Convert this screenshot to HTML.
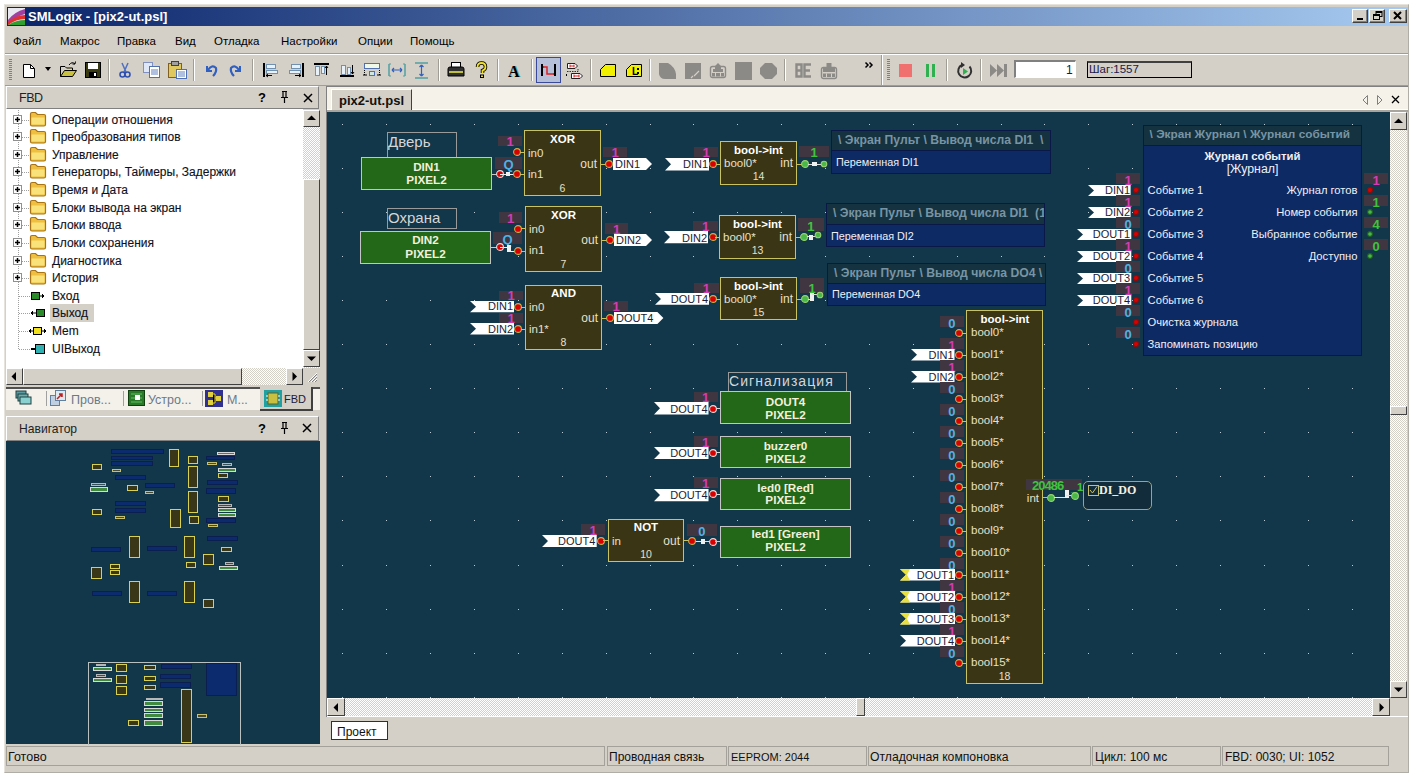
<!DOCTYPE html><html><head><meta charset="utf-8"><style>
*{margin:0;padding:0;box-sizing:border-box}
html,body{width:1416px;height:778px;overflow:hidden;background:#fff;font-family:"Liberation Sans",sans-serif;font-size:12px;color:#000}
div{position:absolute}
.t{white-space:pre;line-height:1}
svg{position:absolute;overflow:visible}
</style></head><body>
<div style="left:4px;top:4px;width:1405px;height:769px;background:#d4d0c8;border-left:1px solid #e6e3dc;border-top:1px solid #e6e3dc;border-right:1px solid #b0ada6;border-bottom:1px solid #b0ada6"></div>
<div style="left:7px;top:7px;width:1401px;height:19px;background:linear-gradient(90deg,#0a246a 0%,#a6caf0 100%)"></div>
<div class="t" style="left:28px;top:10px;color:#fff;font-weight:bold;font-size:13px">SMLogix - [pix2-ut.psl]</div>
<svg style="left:8px;top:8px" width="17" height="17" viewBox="0 0 17 17"><rect x="0" y="0" width="17" height="17" fill="#e8e8f0"/><path d="M0 17 L0 12 Q6 4 17 1 L17 6 Q8 8 0 17Z" fill="#a040a0"/><path d="M0 17 L0 14 Q8 7 17 7 L17 11 Q8 11 0 17Z" fill="#e03030"/><path d="M0 17 Q8 12 17 12 L17 17Z" fill="#30a030"/></svg>
<div style="left:1352px;top:9px;width:16px;height:14px;background:#d4d0c8;border-top:1px solid #fff;border-left:1px solid #fff;border-right:1px solid #404040;border-bottom:1px solid #404040;box-shadow:inset -1px -1px 0 #808080"></div>
<div style="left:1369px;top:9px;width:16px;height:14px;background:#d4d0c8;border-top:1px solid #fff;border-left:1px solid #fff;border-right:1px solid #404040;border-bottom:1px solid #404040;box-shadow:inset -1px -1px 0 #808080"></div>
<div style="left:1389px;top:9px;width:18px;height:14px;background:#d4d0c8;border-top:1px solid #fff;border-left:1px solid #fff;border-right:1px solid #404040;border-bottom:1px solid #404040;box-shadow:inset -1px -1px 0 #808080"></div>
<div style="left:1357px;top:18px;width:6px;height:2px;background:#000"></div>
<svg style="left:1373px;top:11px" width="10" height="10"><rect x="3" y="0.5" width="6" height="5" fill="none" stroke="#000"/><rect x="3" y="0" width="6" height="2" fill="#000"/><rect x="0.5" y="3.5" width="6" height="5" fill="#d4d0c8" stroke="#000"/><rect x="0" y="3" width="7" height="2" fill="#000"/></svg>
<svg style="left:1393px;top:11px" width="10" height="10"><path d="M1 1 L8 8 M8 1 L1 8" stroke="#000" stroke-width="2"/></svg>
<div class="t" style="left:13px;top:36px;font-size:11.5px;color:#000">Файл</div>
<div class="t" style="left:60px;top:36px;font-size:11.5px;color:#000">Макрос</div>
<div class="t" style="left:117px;top:36px;font-size:11.5px;color:#000">Правка</div>
<div class="t" style="left:175px;top:36px;font-size:11.5px;color:#000">Вид</div>
<div class="t" style="left:214px;top:36px;font-size:11.5px;color:#000">Отладка</div>
<div class="t" style="left:281px;top:36px;font-size:11.5px;color:#000">Настройки</div>
<div class="t" style="left:358px;top:36px;font-size:11.5px;color:#000">Опции</div>
<div class="t" style="left:410px;top:36px;font-size:11.5px;color:#000">Помощь</div>
<div style="left:5px;top:53px;width:1403px;height:1px;background:#a09d96"></div>
<div style="left:5px;top:54px;width:1403px;height:1px;background:#fff"></div>
<div style="left:5px;top:85px;width:1403px;height:1px;background:#a09d96"></div>
<div style="left:9px;top:59px;width:3px;height:22px;background:repeating-linear-gradient(180deg,#808080 0 1px,transparent 1px 2px)"></div>
<div style="left:887px;top:59px;width:3px;height:22px;background:repeating-linear-gradient(180deg,#808080 0 1px,transparent 1px 2px)"></div>
<div style="left:108px;top:59px;width:2px;height:22px;border-left:1px solid #a09d96;border-right:1px solid #fff"></div>
<div style="left:193px;top:59px;width:2px;height:22px;border-left:1px solid #a09d96;border-right:1px solid #fff"></div>
<div style="left:252px;top:59px;width:2px;height:22px;border-left:1px solid #a09d96;border-right:1px solid #fff"></div>
<div style="left:438px;top:59px;width:2px;height:22px;border-left:1px solid #a09d96;border-right:1px solid #fff"></div>
<div style="left:497px;top:59px;width:2px;height:22px;border-left:1px solid #a09d96;border-right:1px solid #fff"></div>
<div style="left:531px;top:59px;width:2px;height:22px;border-left:1px solid #a09d96;border-right:1px solid #fff"></div>
<div style="left:590px;top:59px;width:2px;height:22px;border-left:1px solid #a09d96;border-right:1px solid #fff"></div>
<div style="left:649px;top:59px;width:2px;height:22px;border-left:1px solid #a09d96;border-right:1px solid #fff"></div>
<div style="left:784px;top:59px;width:2px;height:22px;border-left:1px solid #a09d96;border-right:1px solid #fff"></div>
<div style="left:881px;top:55px;width:2px;height:30px;border-left:1px solid #a09d96;border-right:1px solid #fff"></div>
<div style="left:946px;top:59px;width:2px;height:22px;border-left:1px solid #a09d96;border-right:1px solid #fff"></div>
<div style="left:980px;top:59px;width:2px;height:22px;border-left:1px solid #a09d96;border-right:1px solid #fff"></div>
<svg style="left:22px;top:63px" width="14" height="16" viewBox="0 0 14 16"><path d="M1.5 1.5 H8.5 L12.5 5.5 V14.5 H1.5Z" fill="#fff" stroke="#000"/><path d="M8.5 1.5 V5.5 H12.5" fill="none" stroke="#000"/></svg>
<svg style="left:45px;top:67px" width="6" height="4" viewBox="0 0 6 4"><path d="M0 0 H6 L3 4Z" fill="#000"/></svg>
<svg style="left:59px;top:61px" width="19" height="17" viewBox="0 0 19 17"><path d="M1.5 5.5 H6 L7.5 7 H13.5 V9" fill="#e8e0a0" stroke="#000"/><path d="M1.5 5.5 V15.5 H13.5 L17.5 9.5 H5.5 L1.5 15.5" fill="#c8c040" stroke="#000"/><path d="M10 4 Q13 0 16 3 M16 3 L16.5 0.5 M16 3 L13.5 3" stroke="#000" fill="none"/></svg>
<svg style="left:85px;top:62px" width="16" height="16" viewBox="0 0 16 16"><rect x="0.5" y="0.5" width="15" height="15" fill="#3a3a10" stroke="#000"/><rect x="3" y="1" width="10" height="6" fill="#fff"/><rect x="4" y="10" width="8" height="5" fill="#000"/><rect x="9" y="11" width="2" height="3" fill="#fff"/></svg>
<svg style="left:119px;top:62px" width="12" height="16" viewBox="0 0 12 16"><path d="M3 1 L7 10 M9 1 L5 10" stroke="#5070c0" stroke-width="1.5"/><circle cx="3.5" cy="12.5" r="2.5" fill="none" stroke="#3050b0" stroke-width="1.6"/><circle cx="8.5" cy="12.5" r="2.5" fill="none" stroke="#3050b0" stroke-width="1.6"/></svg>
<svg style="left:143px;top:62px" width="18" height="16" viewBox="0 0 18 16"><rect x="0.5" y="0.5" width="9" height="10" fill="#e0e8f8" stroke="#8090c0"/><rect x="6.5" y="4.5" width="10" height="11" fill="#fff" stroke="#5070b0"/><path d="M8 8 H15 M8 10 H15 M8 12 H15" stroke="#6080c0"/></svg>
<svg style="left:168px;top:61px" width="19" height="18" viewBox="0 0 19 18"><rect x="0.5" y="2.5" width="13" height="14" fill="#e0c860" stroke="#806020"/><rect x="3.5" y="0.5" width="7" height="4" fill="#a0a0a0" stroke="#404040"/><rect x="8.5" y="8.5" width="10" height="9" fill="#fff" stroke="#5070b0"/><path d="M10 11 H17 M10 13 H17 M10 15 H17" stroke="#6080c0"/></svg>
<svg style="left:204px;top:63px" width="14" height="14" viewBox="0 0 14 14"><path d="M3 3 V8 H8" fill="none" stroke="#3060c0" stroke-width="2"/><path d="M4 7 Q8 1 12 5 Q13 9 9 13" fill="none" stroke="#3060c0" stroke-width="2.2"/></svg>
<svg style="left:229px;top:63px" width="14" height="14" viewBox="0 0 14 14"><path d="M11 3 V8 H6" fill="none" stroke="#3060c0" stroke-width="2"/><path d="M10 7 Q6 1 2 5 Q1 9 5 13" fill="none" stroke="#3060c0" stroke-width="2.2"/></svg>
<svg style="left:263px;top:63px" width="15" height="14" viewBox="0 0 15 14"><rect x="0" y="0" width="2" height="14" fill="#000"/><rect x="3.5" y="1.5" width="9" height="4" fill="#e8f0f8" stroke="#7090b0"/><rect x="3.5" y="7.5" width="11" height="3" fill="#e8f0f8" stroke="#7090b0"/><path d="M3 12.5 H9 M3 12.5 L5 11 M3 12.5 L5 14" stroke="#000"/></svg>
<svg style="left:289px;top:63px" width="15" height="14" viewBox="0 0 15 14"><rect x="13" y="0" width="2" height="14" fill="#000"/><rect x="2.5" y="1.5" width="9" height="4" fill="#e8f0f8" stroke="#7090b0"/><rect x="0.5" y="7.5" width="11" height="3" fill="#e8f0f8" stroke="#7090b0"/><path d="M6 12.5 H12 M12 12.5 L10 11 M12 12.5 L10 14" stroke="#000"/></svg>
<svg style="left:314px;top:63px" width="15" height="14" viewBox="0 0 15 14"><rect x="0" y="0" width="15" height="2" fill="#000"/><rect x="1.5" y="3.5" width="4" height="9" fill="#e8f0f8" stroke="#7090b0"/><rect x="7.5" y="3.5" width="3" height="7" fill="#e8f0f8" stroke="#7090b0"/><path d="M12.5 3 V12 M12.5 3 L11 5 M12.5 3 L14 5" stroke="#000"/></svg>
<svg style="left:340px;top:63px" width="14" height="14" viewBox="0 0 14 14"><rect x="0" y="12" width="14" height="2" fill="#000"/><rect x="1.5" y="2.5" width="4" height="9" fill="#e8f0f8" stroke="#7090b0"/><rect x="7.5" y="4.5" width="3" height="7" fill="#e8f0f8" stroke="#7090b0"/><path d="M12.5 2 V11 M12.5 11 L11 9 M12.5 11 L14 9" stroke="#000"/></svg>
<svg style="left:363px;top:62px" width="18" height="16" viewBox="0 0 18 16"><rect x="1.5" y="1.5" width="15" height="5" fill="#f0f8e8" stroke="#5070b0"/><path d="M1.5 8 V13 M16.5 8 V13" stroke="#000" stroke-dasharray="1 1"/><rect x="6.5" y="9.5" width="5" height="4" fill="#d0e8e0" stroke="#5070b0"/><path d="M0 13 H4 M14 13 H18" stroke="#000"/></svg>
<svg style="left:388px;top:63px" width="18" height="14" viewBox="0 0 18 14"><path d="M1 1 V13 M17 1 V13" stroke="#50a0a0" stroke-width="1.5"/><path d="M1 1 H3 M1 13 H3 M17 1 H15 M17 13 H15" stroke="#50a0a0"/><path d="M4 7 H14 M4 7 L6 5 M4 7 L6 9 M14 7 L12 5 M14 7 L12 9" stroke="#3060c0" stroke-width="1.2"/></svg>
<svg style="left:414px;top:62px" width="15" height="17" viewBox="0 0 15 17"><path d="M1 1 H14 M1 16 H14" stroke="#50a0a0" stroke-width="1.5"/><path d="M7.5 3 V14 M7.5 3 L5.5 5 M7.5 3 L9.5 5 M7.5 14 L5.5 12 M7.5 14 L9.5 12" stroke="#3060c0" stroke-width="1.2"/></svg>
<svg style="left:447px;top:62px" width="18" height="16" viewBox="0 0 18 16"><rect x="4.5" y="0.5" width="9" height="6" fill="#fff" stroke="#000"/><path d="M1 7 Q1 5 3 5 H15 Q17 5 17 7 V14 H1Z" fill="#303030" stroke="#000"/><rect x="2" y="9" width="14" height="2" fill="#c0c040"/></svg>
<svg style="left:475px;top:62px" width="13" height="16" viewBox="0 0 13 16"><path d="M2.5 5 Q2.5 1 6.5 1 Q10.5 1 10.5 5 Q10.5 7.5 7.5 8.5 V11" fill="none" stroke="#000" stroke-width="3.5"/><path d="M2.5 5 Q2.5 1 6.5 1 Q10.5 1 10.5 5 Q10.5 7.5 7.5 8.5 V11" fill="none" stroke="#f0e020" stroke-width="1.8"/><rect x="5" y="12.5" width="4" height="3.5" fill="#000"/><rect x="6" y="13.5" width="2" height="1.5" fill="#f0e020"/></svg>
<div class="t" style="left:508px;top:64px;font-family:'Liberation Serif',serif;font-weight:bold;font-size:16px;color:#000;text-shadow:1px 0 0 #50b8b8">A</div>
<div style="left:536px;top:57px;width:25px;height:26px;background:#b6c0d8;border:1.5px solid #3a4a9a"></div>
<svg style="left:540px;top:63px" width="17" height="14" viewBox="0 0 17 14"><path d="M2 1 V13 M15 1 V13" stroke="#000" stroke-width="2"/><path d="M2 4 H4 M13 11 H15" stroke="#000"/><path d="M3 4 H7 V11 H14" fill="none" stroke="#e02020" stroke-width="1.5"/></svg>
<svg style="left:566px;top:63px" width="18" height="16" viewBox="0 0 18 16"><path d="M1.5 0.5 H9 L11.5 3 L9 5.5 H1.5Z" fill="#fff" stroke="#202020"/><path d="M4 3 H8 M4 1.5 V4.5 M8 1.5 V4.5" stroke="#e02020"/><path d="M1 8.5 H12 M12 6 V9" stroke="#303030" stroke-dasharray="1.5 1"/><path d="M0.5 11 V13" stroke="#000"/><path d="M5.5 10.5 H14 L16.5 13 L14 15.5 H5.5Z" fill="#fff" stroke="#202020"/><path d="M8 13 H13 M8 11.5 V14.5 M13 11.5 V14.5" stroke="#e02020"/></svg>
<svg style="left:600px;top:64px" width="16" height="13" viewBox="0 0 16 13"><path d="M5.5 0.5 H15.5 V12.5 H0.5 V5.5Z" fill="#f0f000" stroke="#000"/></svg>
<svg style="left:626px;top:64px" width="16" height="13" viewBox="0 0 16 13"><path d="M5.5 0.5 H15.5 V12.5 H0.5 V5.5Z" fill="#f0f000" stroke="#000"/><text x="6" y="11" font-family="Liberation Sans" font-weight="bold" font-size="10" fill="#000">L</text><rect x="11" y="4" width="2" height="2" fill="#000"/><rect x="11" y="8" width="2" height="2" fill="#000"/></svg>
<svg style="left:658px;top:62px" width="19" height="18" viewBox="0 0 19 18"><path d="M1 1 H10 Q17 5 18 12 V17 H7 Q2 17 1 12Z" fill="#8c8a86"/></svg>
<svg style="left:684px;top:62px" width="18" height="18" viewBox="0 0 18 18"><path d="M1 1 H17 V17 H1Z" fill="#8c8a86"/><path d="M10 14 L15 9 M7 16 L9 14" stroke="#d4d0c8" stroke-width="1.2"/></svg>
<svg style="left:709px;top:62px" width="18" height="17" viewBox="0 0 18 17"><rect x="1.5" y="4.5" width="15" height="11" rx="2" fill="none" stroke="#8c8a86" stroke-width="1.4"/><path d="M9 1 L12 4 V7 H14 V10 H4 V7 H6 V4Z" fill="#8c8a86"/><rect x="3" y="11" width="12" height="3.5" fill="#8c8a86"/><path d="M6.5 11 V14.5 M11.5 11 V14.5" stroke="#d4d0c8" stroke-width="1"/></svg>
<svg style="left:734px;top:62px" width="18" height="18" viewBox="0 0 18 18"><rect x="1" y="2" width="17" height="16" fill="#8c8a86"/><rect x="1" y="0" width="17" height="3" fill="#8c8a86"/></svg>
<svg style="left:759px;top:62px" width="19" height="18" viewBox="0 0 19 18"><path d="M6 1 H13 L18 6 V12 L13 17 H6 L1 12 V6Z" fill="#8c8a86"/></svg>
<svg style="left:795px;top:63px" width="17" height="15" viewBox="0 0 17 15"><path d="M1.5 1.5 H6.5 V13.5 H1.5Z M1.5 7.5 H6.5" fill="none" stroke="#8c8a86" stroke-width="2.4"/><path d="M16 1.5 H9.5 V13.5 H16 M9.5 7.5 H15" fill="none" stroke="#8c8a86" stroke-width="2.4"/></svg>
<svg style="left:820px;top:62px" width="18" height="17" viewBox="0 0 18 17"><rect x="1.5" y="5.5" width="15" height="11" rx="2" fill="none" stroke="#8c8a86" stroke-width="1.4"/><rect x="6.5" y="1" width="5" height="4" fill="#8c8a86"/><rect x="3" y="6" width="12" height="4" fill="#8c8a86"/><rect x="3" y="11.5" width="12" height="3.5" fill="#8c8a86"/><path d="M6.5 11.5 V15 M11.5 11.5 V15" stroke="#d4d0c8" stroke-width="1"/></svg>
<svg style="left:865px;top:62px" width="9" height="6" viewBox="0 0 9 6"><path d="M0.5 0.5 L3 3 L0.5 5.5 M4.5 0.5 L7 3 L4.5 5.5" fill="none" stroke="#000" stroke-width="1.5"/></svg>
<div style="left:899px;top:64px;width:13px;height:13px;background:#f07070"></div>
<div style="left:926px;top:64px;width:3px;height:13px;background:#30b050"></div>
<div style="left:932px;top:64px;width:3px;height:13px;background:#30b050"></div>
<svg style="left:956px;top:62px" width="18" height="17" viewBox="0 0 18 17"><path d="M13.5 4.5 A6.5 6.5 0 1 1 6 3" fill="none" stroke="#303030" stroke-width="2"/><path d="M5 0 L9 3 L5 6Z" fill="#303030"/><path d="M7 6 L12 9.5 L7 13Z" fill="#30b050"/></svg>
<svg style="left:990px;top:64px" width="17" height="13" viewBox="0 0 17 13"><path d="M0 0 L7 6.5 L0 13Z M7 0 L14 6.5 L7 13Z" fill="#8c8a86"/><rect x="14" y="0" width="3" height="13" fill="#8c8a86"/></svg>
<div style="left:1014px;top:60px;width:62px;height:18px;background:#fff;border-top:2px solid #808080;border-left:2px solid #808080;border-bottom:1px solid #fff;border-right:1px solid #fff"></div>
<div class="t" style="left:1066px;top:64px;font-size:12px;color:#1a1a4a">1</div>
<div style="left:1087px;top:61px;width:105px;height:17px;border:1px solid #000;border-top:2px solid #404040"></div>
<div class="t" style="left:1089px;top:64px;font-size:11.5px;color:#1a1a4a">Шаг:1557</div>
<div style="left:6px;top:86px;width:313px;height:23px;background:#d4d0c8;border-top:1px solid #fff;border-bottom:1px solid #808080;border-left:1px solid #fff;border-right:1px solid #808080"></div>
<div class="t" style="left:19px;top:92px;font-size:12.5px;color:#222;letter-spacing:-0.5px">FBD</div>
<div class="t" style="left:258px;top:91px;font-size:13px;font-weight:bold">?</div>
<svg style="left:280px;top:91px" width="10" height="12"><path d="M2 0.5 H7 M3 0.5 V6 M6 0.5 V6 M1 6.5 H8 M4.5 7 V12" stroke="#000" stroke-width="1.2"/></svg>
<svg style="left:303px;top:93px" width="10" height="10"><path d="M1 1 L9 9 M9 1 L1 9" stroke="#000" stroke-width="1.5"/></svg>
<div style="left:6px;top:109px;width:297px;height:259px;background:#fff"></div>
<div style="left:303px;top:110px;width:17px;height:258px;background:repeating-conic-gradient(#fff 0 25%,#d4d0c8 0 50%) 0 0/2px 2px"></div>
<div style="left:303px;top:110px;width:17px;height:17px;background:#d4d0c8;border-top:1px solid #fff;border-left:1px solid #fff;border-right:1px solid #404040;border-bottom:1px solid #404040"></div>
<svg style="left:307px;top:115px" width="9" height="6"><path d="M0 5 L4.5 0.5 L9 5Z" fill="#000"/></svg>
<div style="left:303px;top:179px;width:17px;height:171px;background:#d4d0c8;border-top:1px solid #fff;border-left:1px solid #fff;border-right:1px solid #404040;border-bottom:1px solid #404040"></div>
<div style="left:303px;top:350px;width:17px;height:17px;background:#d4d0c8;border-top:1px solid #fff;border-left:1px solid #fff;border-right:1px solid #404040;border-bottom:1px solid #404040"></div>
<svg style="left:307px;top:356px" width="9" height="6"><path d="M0 0.5 L4.5 5 L9 0.5Z" fill="#000"/></svg>
<div style="left:6px;top:368px;width:314px;height:17px;background:repeating-conic-gradient(#fff 0 25%,#d4d0c8 0 50%) 0 0/2px 2px"></div>
<div style="left:6px;top:368px;width:17px;height:17px;background:#d4d0c8;border-top:1px solid #fff;border-left:1px solid #fff;border-right:1px solid #404040;border-bottom:1px solid #404040"></div>
<svg style="left:11px;top:372px" width="6" height="9"><path d="M5 0 L0.5 4.5 L5 9Z" fill="#000"/></svg>
<div style="left:23px;top:368px;width:219px;height:17px;background:#d4d0c8;border-top:1px solid #fff;border-left:1px solid #fff;border-right:1px solid #404040;border-bottom:1px solid #404040"></div>
<div style="left:286px;top:368px;width:17px;height:17px;background:#d4d0c8;border-top:1px solid #fff;border-left:1px solid #fff;border-right:1px solid #404040;border-bottom:1px solid #404040"></div>
<svg style="left:292px;top:372px" width="6" height="9"><path d="M0.5 0 L5 4.5 L0.5 9Z" fill="#000"/></svg>
<div style="left:303px;top:368px;width:17px;height:17px;background:#d4d0c8"></div>
<svg style="left:306px;top:371px" width="12" height="12"><path d="M11 2 L2 11 M11 5 L5 11 M11 8 L8 11" stroke="#fff" stroke-width="1"/><path d="M11 3 L3 11 M11 6 L6 11 M11 9 L9 11" stroke="#808080" stroke-width="1"/></svg>
<div style="left:18px;top:110px;width:1px;height:239px;background:repeating-linear-gradient(180deg,#a0a0a0 0 1px,transparent 1px 2px)"></div>
<div style="left:13px;top:115px;width:9px;height:9px;background:#fff;border:1px solid #909090"></div>
<svg style="left:13px;top:115px" width="9" height="9"><path d="M2 4.5 H7 M4.5 2 V7" stroke="#000" stroke-width="1.5"/></svg>
<div style="left:22px;top:120px;width:7px;height:1px;background:repeating-linear-gradient(90deg,#a0a0a0 0 1px,transparent 1px 2px)"></div>
<div style="left:29px;top:111px;width:18px;height:16px"><svg width="18" height="16" viewBox="0 0 18 16"><path d="M1.5 3 Q1.5 1.5 3 1.5 H6.5 L8.5 3.5 H15 Q16.5 3.5 16.5 5 V13.5 Q16.5 15 15 15 H3 Q1.5 15 1.5 13.5Z" fill="#eebf40" stroke="#a87414" stroke-width="1.2"/><path d="M2.5 6.5 H15.5 V13.5 H2.5Z" fill="#fae27a"/></svg></div>
<div class="t" style="left:52px;top:114px;font-size:12px;color:#101020;-webkit-text-stroke:0.12px #101020">Операции отношения</div>
<div style="left:13px;top:132px;width:9px;height:9px;background:#fff;border:1px solid #909090"></div>
<svg style="left:13px;top:132px" width="9" height="9"><path d="M2 4.5 H7 M4.5 2 V7" stroke="#000" stroke-width="1.5"/></svg>
<div style="left:22px;top:137px;width:7px;height:1px;background:repeating-linear-gradient(90deg,#a0a0a0 0 1px,transparent 1px 2px)"></div>
<div style="left:29px;top:128px;width:18px;height:16px"><svg width="18" height="16" viewBox="0 0 18 16"><path d="M1.5 3 Q1.5 1.5 3 1.5 H6.5 L8.5 3.5 H15 Q16.5 3.5 16.5 5 V13.5 Q16.5 15 15 15 H3 Q1.5 15 1.5 13.5Z" fill="#eebf40" stroke="#a87414" stroke-width="1.2"/><path d="M2.5 6.5 H15.5 V13.5 H2.5Z" fill="#fae27a"/></svg></div>
<div class="t" style="left:52px;top:131px;font-size:12px;color:#101020;-webkit-text-stroke:0.12px #101020">Преобразования типов</div>
<div style="left:13px;top:150px;width:9px;height:9px;background:#fff;border:1px solid #909090"></div>
<svg style="left:13px;top:150px" width="9" height="9"><path d="M2 4.5 H7 M4.5 2 V7" stroke="#000" stroke-width="1.5"/></svg>
<div style="left:22px;top:155px;width:7px;height:1px;background:repeating-linear-gradient(90deg,#a0a0a0 0 1px,transparent 1px 2px)"></div>
<div style="left:29px;top:146px;width:18px;height:16px"><svg width="18" height="16" viewBox="0 0 18 16"><path d="M1.5 3 Q1.5 1.5 3 1.5 H6.5 L8.5 3.5 H15 Q16.5 3.5 16.5 5 V13.5 Q16.5 15 15 15 H3 Q1.5 15 1.5 13.5Z" fill="#eebf40" stroke="#a87414" stroke-width="1.2"/><path d="M2.5 6.5 H15.5 V13.5 H2.5Z" fill="#fae27a"/></svg></div>
<div class="t" style="left:52px;top:149px;font-size:12px;color:#101020;-webkit-text-stroke:0.12px #101020">Управление</div>
<div style="left:13px;top:167px;width:9px;height:9px;background:#fff;border:1px solid #909090"></div>
<svg style="left:13px;top:167px" width="9" height="9"><path d="M2 4.5 H7 M4.5 2 V7" stroke="#000" stroke-width="1.5"/></svg>
<div style="left:22px;top:172px;width:7px;height:1px;background:repeating-linear-gradient(90deg,#a0a0a0 0 1px,transparent 1px 2px)"></div>
<div style="left:29px;top:163px;width:18px;height:16px"><svg width="18" height="16" viewBox="0 0 18 16"><path d="M1.5 3 Q1.5 1.5 3 1.5 H6.5 L8.5 3.5 H15 Q16.5 3.5 16.5 5 V13.5 Q16.5 15 15 15 H3 Q1.5 15 1.5 13.5Z" fill="#eebf40" stroke="#a87414" stroke-width="1.2"/><path d="M2.5 6.5 H15.5 V13.5 H2.5Z" fill="#fae27a"/></svg></div>
<div class="t" style="left:52px;top:166px;font-size:12px;color:#101020;-webkit-text-stroke:0.12px #101020">Генераторы, Таймеры, Задержки</div>
<div style="left:13px;top:185px;width:9px;height:9px;background:#fff;border:1px solid #909090"></div>
<svg style="left:13px;top:185px" width="9" height="9"><path d="M2 4.5 H7 M4.5 2 V7" stroke="#000" stroke-width="1.5"/></svg>
<div style="left:22px;top:190px;width:7px;height:1px;background:repeating-linear-gradient(90deg,#a0a0a0 0 1px,transparent 1px 2px)"></div>
<div style="left:29px;top:181px;width:18px;height:16px"><svg width="18" height="16" viewBox="0 0 18 16"><path d="M1.5 3 Q1.5 1.5 3 1.5 H6.5 L8.5 3.5 H15 Q16.5 3.5 16.5 5 V13.5 Q16.5 15 15 15 H3 Q1.5 15 1.5 13.5Z" fill="#eebf40" stroke="#a87414" stroke-width="1.2"/><path d="M2.5 6.5 H15.5 V13.5 H2.5Z" fill="#fae27a"/></svg></div>
<div class="t" style="left:52px;top:184px;font-size:12px;color:#101020;-webkit-text-stroke:0.12px #101020">Время и Дата</div>
<div style="left:13px;top:203px;width:9px;height:9px;background:#fff;border:1px solid #909090"></div>
<svg style="left:13px;top:203px" width="9" height="9"><path d="M2 4.5 H7 M4.5 2 V7" stroke="#000" stroke-width="1.5"/></svg>
<div style="left:22px;top:208px;width:7px;height:1px;background:repeating-linear-gradient(90deg,#a0a0a0 0 1px,transparent 1px 2px)"></div>
<div style="left:29px;top:199px;width:18px;height:16px"><svg width="18" height="16" viewBox="0 0 18 16"><path d="M1.5 3 Q1.5 1.5 3 1.5 H6.5 L8.5 3.5 H15 Q16.5 3.5 16.5 5 V13.5 Q16.5 15 15 15 H3 Q1.5 15 1.5 13.5Z" fill="#eebf40" stroke="#a87414" stroke-width="1.2"/><path d="M2.5 6.5 H15.5 V13.5 H2.5Z" fill="#fae27a"/></svg></div>
<div class="t" style="left:52px;top:202px;font-size:12px;color:#101020;-webkit-text-stroke:0.12px #101020">Блоки вывода на экран</div>
<div style="left:13px;top:220px;width:9px;height:9px;background:#fff;border:1px solid #909090"></div>
<svg style="left:13px;top:220px" width="9" height="9"><path d="M2 4.5 H7 M4.5 2 V7" stroke="#000" stroke-width="1.5"/></svg>
<div style="left:22px;top:225px;width:7px;height:1px;background:repeating-linear-gradient(90deg,#a0a0a0 0 1px,transparent 1px 2px)"></div>
<div style="left:29px;top:216px;width:18px;height:16px"><svg width="18" height="16" viewBox="0 0 18 16"><path d="M1.5 3 Q1.5 1.5 3 1.5 H6.5 L8.5 3.5 H15 Q16.5 3.5 16.5 5 V13.5 Q16.5 15 15 15 H3 Q1.5 15 1.5 13.5Z" fill="#eebf40" stroke="#a87414" stroke-width="1.2"/><path d="M2.5 6.5 H15.5 V13.5 H2.5Z" fill="#fae27a"/></svg></div>
<div class="t" style="left:52px;top:219px;font-size:12px;color:#101020;-webkit-text-stroke:0.12px #101020">Блоки ввода</div>
<div style="left:13px;top:238px;width:9px;height:9px;background:#fff;border:1px solid #909090"></div>
<svg style="left:13px;top:238px" width="9" height="9"><path d="M2 4.5 H7 M4.5 2 V7" stroke="#000" stroke-width="1.5"/></svg>
<div style="left:22px;top:243px;width:7px;height:1px;background:repeating-linear-gradient(90deg,#a0a0a0 0 1px,transparent 1px 2px)"></div>
<div style="left:29px;top:234px;width:18px;height:16px"><svg width="18" height="16" viewBox="0 0 18 16"><path d="M1.5 3 Q1.5 1.5 3 1.5 H6.5 L8.5 3.5 H15 Q16.5 3.5 16.5 5 V13.5 Q16.5 15 15 15 H3 Q1.5 15 1.5 13.5Z" fill="#eebf40" stroke="#a87414" stroke-width="1.2"/><path d="M2.5 6.5 H15.5 V13.5 H2.5Z" fill="#fae27a"/></svg></div>
<div class="t" style="left:52px;top:237px;font-size:12px;color:#101020;-webkit-text-stroke:0.12px #101020">Блоки сохранения</div>
<div style="left:13px;top:256px;width:9px;height:9px;background:#fff;border:1px solid #909090"></div>
<svg style="left:13px;top:256px" width="9" height="9"><path d="M2 4.5 H7 M4.5 2 V7" stroke="#000" stroke-width="1.5"/></svg>
<div style="left:22px;top:261px;width:7px;height:1px;background:repeating-linear-gradient(90deg,#a0a0a0 0 1px,transparent 1px 2px)"></div>
<div style="left:29px;top:252px;width:18px;height:16px"><svg width="18" height="16" viewBox="0 0 18 16"><path d="M1.5 3 Q1.5 1.5 3 1.5 H6.5 L8.5 3.5 H15 Q16.5 3.5 16.5 5 V13.5 Q16.5 15 15 15 H3 Q1.5 15 1.5 13.5Z" fill="#eebf40" stroke="#a87414" stroke-width="1.2"/><path d="M2.5 6.5 H15.5 V13.5 H2.5Z" fill="#fae27a"/></svg></div>
<div class="t" style="left:52px;top:255px;font-size:12px;color:#101020;-webkit-text-stroke:0.12px #101020">Диагностика</div>
<div style="left:13px;top:273px;width:9px;height:9px;background:#fff;border:1px solid #909090"></div>
<svg style="left:13px;top:273px" width="9" height="9"><path d="M2 4.5 H7 M4.5 2 V7" stroke="#000" stroke-width="1.5"/></svg>
<div style="left:22px;top:278px;width:7px;height:1px;background:repeating-linear-gradient(90deg,#a0a0a0 0 1px,transparent 1px 2px)"></div>
<div style="left:29px;top:269px;width:18px;height:16px"><svg width="18" height="16" viewBox="0 0 18 16"><path d="M1.5 3 Q1.5 1.5 3 1.5 H6.5 L8.5 3.5 H15 Q16.5 3.5 16.5 5 V13.5 Q16.5 15 15 15 H3 Q1.5 15 1.5 13.5Z" fill="#eebf40" stroke="#a87414" stroke-width="1.2"/><path d="M2.5 6.5 H15.5 V13.5 H2.5Z" fill="#fae27a"/></svg></div>
<div class="t" style="left:52px;top:272px;font-size:12px;color:#101020;-webkit-text-stroke:0.12px #101020">История</div>
<div style="left:19px;top:296px;width:12px;height:1px;background:repeating-linear-gradient(90deg,#a0a0a0 0 1px,transparent 1px 2px)"></div>
<div class="t" style="left:52px;top:290px;font-size:12px;color:#101020;-webkit-text-stroke:0.12px #101020">Вход</div>
<div style="left:19px;top:313px;width:12px;height:1px;background:repeating-linear-gradient(90deg,#a0a0a0 0 1px,transparent 1px 2px)"></div>
<div style="left:50px;top:304px;width:44px;height:18px;background:#d4d0c8"></div>
<div class="t" style="left:52px;top:307px;font-size:12px;color:#101020;-webkit-text-stroke:0.12px #101020">Выход</div>
<div style="left:19px;top:331px;width:12px;height:1px;background:repeating-linear-gradient(90deg,#a0a0a0 0 1px,transparent 1px 2px)"></div>
<div class="t" style="left:52px;top:325px;font-size:12px;color:#101020;-webkit-text-stroke:0.12px #101020">Mem</div>
<div style="left:19px;top:349px;width:12px;height:1px;background:repeating-linear-gradient(90deg,#a0a0a0 0 1px,transparent 1px 2px)"></div>
<div class="t" style="left:52px;top:343px;font-size:12px;color:#101020;-webkit-text-stroke:0.12px #101020">UIВыход</div>
<svg style="left:31px;top:291px" width="14" height="10"><rect x="0.5" y="1.5" width="8" height="7" fill="#2a8a2a" stroke="#000"/><path d="M9 5 H13 M11 3 L13 5 L11 7" stroke="#000"/></svg>
<svg style="left:31px;top:308px" width="14" height="10"><rect x="5.5" y="1.5" width="8" height="7" fill="#2a8a2a" stroke="#000"/><path d="M0 5 H5 M2 3 L0 5 L2 7" stroke="#000"/></svg>
<svg style="left:29px;top:326px" width="18" height="10"><rect x="4.5" y="1.5" width="8" height="7" fill="#f0e020" stroke="#000"/><path d="M0 5 H4 M13 5 H17 M2 3 L0 5 L2 7 M15 3 L17 5 L15 7" stroke="#000"/></svg>
<svg style="left:31px;top:343px" width="15" height="12"><rect x="4.5" y="1.5" width="9" height="9" fill="#30b0b0" stroke="#000"/><path d="M0 6 H4" stroke="#000" stroke-width="2"/></svg>
<div style="left:6px;top:388px;width:314px;height:22px;background:#f3f1ea"></div>
<div style="left:6px;top:387px;width:254px;height:2px;background:#505050"></div>
<div style="left:312px;top:387px;width:8px;height:2px;background:#505050"></div>
<div style="left:260px;top:387px;width:53px;height:24px;background:#d4d0c8;border-right:2px solid #404040;border-bottom:2px solid #404040"></div>
<div style="left:46px;top:391px;width:1px;height:15px;background:#a0a0a0"></div>
<div style="left:123px;top:391px;width:1px;height:15px;background:#a0a0a0"></div>
<div style="left:202px;top:391px;width:1px;height:15px;background:#a0a0a0"></div>
<svg style="left:15px;top:390px" width="17" height="15"><rect x="1" y="1" width="10" height="7" fill="#5a9aa0" stroke="#204040"/><rect x="3" y="4" width="10" height="7" fill="#6ab0b0" stroke="#204040"/><rect x="5" y="7" width="11" height="7" fill="#8ad0d0" stroke="#204040"/></svg>
<svg style="left:50px;top:390px" width="16" height="16"><rect x="0.5" y="5.5" width="9" height="10" fill="#c0d0e0" stroke="#6080a0"/><rect x="5.5" y="0.5" width="10" height="10" fill="#e0e8f0" stroke="#6080a0"/><path d="M7 9 L12 4 M9 4 H12 V7" stroke="#c02020" stroke-width="1.5"/></svg>
<div class="t" style="left:71px;top:394px;font-size:12.5px;color:#6a7a8a">Пров...</div>
<svg style="left:128px;top:390px" width="17" height="16"><rect x="0.5" y="0.5" width="16" height="15" fill="#2a7a2a" stroke="#104010"/><path d="M3 4 H14 M3 8 H14 M3 12 H14" stroke="#60c060"/><rect x="7" y="5" width="5" height="5" fill="#fff"/></svg>
<div class="t" style="left:148px;top:394px;font-size:12.5px;color:#6a7a8a">Устро...</div>
<svg style="left:205px;top:390px" width="18" height="17"><rect x="0" y="0" width="18" height="17" fill="#303090"/><rect x="3" y="2" width="5" height="5" fill="#e0d040"/><rect x="3" y="10" width="5" height="5" fill="#e0d040"/><rect x="11" y="6" width="5" height="5" fill="#e0d040"/><path d="M8 4 H10 V13 H8 M10 8 H11" stroke="#e0d040"/></svg>
<div class="t" style="left:227px;top:394px;font-size:12.5px;color:#6a7a8a">M...</div>
<svg style="left:264px;top:390px" width="18" height="17"><rect x="0" y="0" width="18" height="17" fill="#20a0a0"/><rect x="4" y="3" width="10" height="11" fill="#c8c040" stroke="#606020"/><path d="M2 6 H4 M2 10 H4 M14 6 H16 M14 10 H16" stroke="#fff"/></svg>
<div class="t" style="left:284px;top:394px;font-size:11px;color:#1a1a3a">FBD</div>
<div style="left:6px;top:416px;width:313px;height:25px;background:#d4d0c8;border-top:1px solid #fff;border-bottom:1px solid #808080;border-left:1px solid #fff;border-right:1px solid #808080"></div>
<div class="t" style="left:19px;top:423px;font-size:12.1px;color:#222">Навигатор</div>
<div class="t" style="left:258px;top:422px;font-size:13px;font-weight:bold">?</div>
<svg style="left:280px;top:422px" width="10" height="12"><path d="M2 0.5 H7 M3 0.5 V6 M6 0.5 V6 M1 6.5 H8 M4.5 7 V12" stroke="#000" stroke-width="1.2"/></svg>
<svg style="left:302px;top:423px" width="10" height="10"><path d="M1 1 L9 9 M9 1 L1 9" stroke="#000" stroke-width="1.5"/></svg>
<div style="left:6px;top:441px;width:314px;height:303px;background:#12364a"></div>
<div style="left:111px;top:449px;width:53px;height:5px;background:#0c2a6e;border:1px solid #0a1f50"></div>
<div style="left:169px;top:449px;width:10px;height:18px;background:#3a3618;border:1px solid #d8d050"></div>
<div style="left:217px;top:452px;width:18px;height:3px;background:#3f8a3f;border:1px solid #d8d8d8"></div>
<div style="left:111px;top:456px;width:42px;height:4px;background:#0c2a6e;border:1px solid #0a1f50"></div>
<div style="left:188px;top:456px;width:10px;height:8px;background:#3a3618;border:1px solid #d8d050"></div>
<div style="left:206px;top:456px;width:29px;height:4px;background:#0c2a6e;border:1px solid #0a1f50"></div>
<div style="left:111px;top:461px;width:42px;height:5px;background:#0c2a6e;border:1px solid #0a1f50"></div>
<div style="left:207px;top:462px;width:10px;height:3px;background:#4a4a30;border:1px solid #c8c070"></div>
<div style="left:222px;top:463px;width:10px;height:3px;background:#3a5058;border:1px solid #b8b8b8"></div>
<div style="left:92px;top:464px;width:10px;height:6px;background:#3a3618;border:1px solid #d8d050"></div>
<div style="left:218px;top:468px;width:18px;height:4px;background:#3f8a3f;border:1px solid #d8d8d8"></div>
<div style="left:112px;top:469px;width:9px;height:3px;background:#4a4a30;border:1px solid #c8c070"></div>
<div style="left:188px;top:466px;width:10px;height:22px;background:#3a3618;border:1px solid #d8d050"></div>
<div style="left:218px;top:473px;width:10px;height:5px;background:#3a3618;border:1px solid #d8d050"></div>
<div style="left:115px;top:475px;width:31px;height:5px;background:#0c2a6e;border:1px solid #0a1f50"></div>
<div style="left:207px;top:480px;width:31px;height:5px;background:#0c2a6e;border:1px solid #0a1f50"></div>
<div style="left:91px;top:483px;width:15px;height:3px;background:#3a5058;border:1px solid #b8b8b8"></div>
<div style="left:90px;top:487px;width:18px;height:5px;background:#3f8a3f;border:1px solid #d8d8d8"></div>
<div style="left:127px;top:485px;width:11px;height:6px;background:#3a3618;border:1px solid #d8d050"></div>
<div style="left:145px;top:483px;width:30px;height:5px;background:#0c2a6e;border:1px solid #0a1f50"></div>
<div style="left:145px;top:491px;width:9px;height:3px;background:#4a4a30;border:1px solid #c8c070"></div>
<div style="left:206px;top:488px;width:30px;height:6px;background:#0c2a6e;border:1px solid #0a1f50"></div>
<div style="left:188px;top:491px;width:10px;height:22px;background:#3a3618;border:1px solid #d8d050"></div>
<div style="left:218px;top:496px;width:11px;height:6px;background:#3a3618;border:1px solid #d8d050"></div>
<div style="left:115px;top:501px;width:31px;height:5px;background:#0c2a6e;border:1px solid #0a1f50"></div>
<div style="left:218px;top:504px;width:14px;height:3px;background:#3a5058;border:1px solid #b8b8b8"></div>
<div style="left:218px;top:508px;width:18px;height:4px;background:#3f8a3f;border:1px solid #d8d8d8"></div>
<div style="left:92px;top:509px;width:10px;height:6px;background:#3a3618;border:1px solid #d8d050"></div>
<div style="left:115px;top:508px;width:31px;height:5px;background:#0c2a6e;border:1px solid #0a1f50"></div>
<div style="left:218px;top:513px;width:18px;height:4px;background:#3f8a3f;border:1px solid #d8d8d8"></div>
<div style="left:170px;top:509px;width:11px;height:19px;background:#3a3618;border:1px solid #d8d050"></div>
<div style="left:115px;top:516px;width:10px;height:3px;background:#4a4a30;border:1px solid #c8c070"></div>
<div style="left:189px;top:516px;width:10px;height:8px;background:#3a3618;border:1px solid #d8d050"></div>
<div style="left:206px;top:518px;width:30px;height:5px;background:#0c2a6e;border:1px solid #0a1f50"></div>
<div style="left:208px;top:524px;width:10px;height:3px;background:#4a4a30;border:1px solid #c8c070"></div>
<div style="left:207px;top:536px;width:31px;height:5px;background:#0c2a6e;border:1px solid #0a1f50"></div>
<div style="left:129px;top:536px;width:11px;height:22px;background:#3a3618;border:1px solid #d8d050"></div>
<div style="left:184px;top:536px;width:11px;height:22px;background:#3a3618;border:1px solid #d8d050"></div>
<div style="left:91px;top:547px;width:30px;height:5px;background:#0c2a6e;border:1px solid #0a1f50"></div>
<div style="left:147px;top:546px;width:30px;height:5px;background:#0c2a6e;border:1px solid #0a1f50"></div>
<div style="left:221px;top:547px;width:11px;height:5px;background:#3a3618;border:1px solid #d8d050"></div>
<div style="left:203px;top:554px;width:11px;height:11px;background:#3a3618;border:1px solid #d8d050"></div>
<div style="left:225px;top:562px;width:9px;height:3px;background:#3a5058;border:1px solid #b8b8b8"></div>
<div style="left:219px;top:566px;width:19px;height:4px;background:#3f8a3f;border:1px solid #d8d8d8"></div>
<div style="left:186px;top:562px;width:10px;height:6px;background:#3a3618;border:1px solid #d8d050"></div>
<div style="left:91px;top:567px;width:11px;height:12px;background:#3a3618;border:1px solid #d8d050"></div>
<div style="left:110px;top:564px;width:10px;height:5px;background:#3a3618;border:1px solid #d8d050"></div>
<div style="left:110px;top:570px;width:10px;height:5px;background:#3a3618;border:1px solid #d8d050"></div>
<div style="left:92px;top:591px;width:30px;height:5px;background:#0c2a6e;border:1px solid #0a1f50"></div>
<div style="left:129px;top:581px;width:11px;height:22px;background:#3a3618;border:1px solid #d8d050"></div>
<div style="left:147px;top:591px;width:30px;height:5px;background:#0c2a6e;border:1px solid #0a1f50"></div>
<div style="left:184px;top:581px;width:11px;height:22px;background:#3a3618;border:1px solid #d8d050"></div>
<div style="left:203px;top:599px;width:11px;height:9px;background:#3a3618;border:1px solid #d8d050"></div>
<div style="left:96px;top:664px;width:10px;height:2px;background:#3a5058;border:1px solid #b8b8b8"></div>
<div style="left:93px;top:667px;width:19px;height:4px;background:#3f8a3f;border:1px solid #d8d8d8"></div>
<div style="left:116px;top:664px;width:11px;height:8px;background:#3a3618;border:1px solid #d8d050"></div>
<div style="left:144px;top:665px;width:12px;height:5px;background:#3a3618;border:1px solid #d8d050"></div>
<div style="left:161px;top:664px;width:31px;height:5px;background:#0c2a6e;border:1px solid #0a1f50"></div>
<div style="left:206px;top:663px;width:31px;height:33px;background:#0c2a6e;border:1px solid #0a1f50"></div>
<div style="left:96px;top:674px;width:10px;height:3px;background:#3a5058;border:1px solid #b8b8b8"></div>
<div style="left:93px;top:678px;width:19px;height:4px;background:#3f8a3f;border:1px solid #d8d8d8"></div>
<div style="left:116px;top:675px;width:11px;height:9px;background:#3a3618;border:1px solid #d8d050"></div>
<div style="left:144px;top:676px;width:12px;height:5px;background:#3a3618;border:1px solid #d8d050"></div>
<div style="left:160px;top:674px;width:31px;height:5px;background:#0c2a6e;border:1px solid #0a1f50"></div>
<div style="left:116px;top:686px;width:11px;height:9px;background:#3a3618;border:1px solid #d8d050"></div>
<div style="left:144px;top:685px;width:12px;height:5px;background:#3a3618;border:1px solid #d8d050"></div>
<div style="left:160px;top:682px;width:31px;height:6px;background:#0c2a6e;border:1px solid #0a1f50"></div>
<div style="left:181px;top:689px;width:11px;height:54px;background:#3a3618;border:1px solid #d8d050"></div>
<div style="left:146px;top:698px;width:17px;height:2px;background:#3a5058;border:1px solid #b8b8b8"></div>
<div style="left:144px;top:701px;width:19px;height:5px;background:#3f8a3f;border:1px solid #d8d8d8"></div>
<div style="left:144px;top:708px;width:19px;height:4px;background:#3f8a3f;border:1px solid #d8d8d8"></div>
<div style="left:144px;top:713px;width:19px;height:5px;background:#3f8a3f;border:1px solid #d8d8d8"></div>
<div style="left:128px;top:720px;width:11px;height:6px;background:#3a3618;border:1px solid #d8d050"></div>
<div style="left:144px;top:720px;width:19px;height:6px;background:#3f8a3f;border:1px solid #d8d8d8"></div>
<div style="left:197px;top:714px;width:10px;height:4px;background:#4a4a30;border:1px solid #c8c070"></div>
<div style="left:88px;top:662px;width:153px;height:83px;border:1px solid #b8c0c0;border-bottom:none"></div>
<div style="left:326px;top:86px;width:1082px;height:1px;background:#808080"></div>
<div style="left:326px;top:86px;width:1px;height:631px;background:#808080"></div>
<div style="left:327px;top:87px;width:1081px;height:23px;background:#f5f2ea"></div>
<div style="left:327px;top:109px;width:1081px;height:1px;background:#fff"></div>
<div style="left:327px;top:110px;width:1081px;height:2px;background:#a8a59e"></div>
<div style="left:331px;top:89px;width:81px;height:21px;background:#d4d0c8;border-top:1px solid #fff;border-left:1px solid #fff;border-right:1px solid #404040"></div>
<div class="t" style="left:339px;top:94px;font-size:13px;font-weight:bold;color:#111">pix2-ut.psl</div>
<svg style="left:1361px;top:94px" width="40" height="12"><path d="M6.5 1.5 L2 6 L6.5 10.5Z" fill="none" stroke="#808080"/><path d="M16.5 1.5 L21 6 L16.5 10.5Z" fill="none" stroke="#808080"/><path d="M31 2 L38 9 M38 2 L31 9" stroke="#000" stroke-width="1.3"/></svg>
<div style="left:327px;top:112px;width:1063px;height:586px;background:#12364a"></div>
<div style="left:1390px;top:112px;width:17px;height:586px;background:repeating-conic-gradient(#fff 0 25%,#d4d0c8 0 50%) 0 0/2px 2px"></div>
<div style="left:1390px;top:112px;width:17px;height:18px;background:#d4d0c8;border-top:1px solid #fff;border-left:1px solid #fff;border-right:1px solid #404040;border-bottom:1px solid #404040"></div>
<svg style="left:1394px;top:118px" width="9" height="6"><path d="M0 5 L4.5 0.5 L9 5Z" fill="#000"/></svg>
<div style="left:1390px;top:406px;width:17px;height:9px;background:#d4d0c8;border-top:1px solid #fff;border-left:1px solid #fff;border-right:1px solid #404040;border-bottom:1px solid #404040"></div>
<div style="left:1390px;top:681px;width:17px;height:17px;background:#d4d0c8;border-top:1px solid #fff;border-left:1px solid #fff;border-right:1px solid #404040;border-bottom:1px solid #404040"></div>
<svg style="left:1394px;top:687px" width="9" height="6"><path d="M0 0.5 L4.5 5 L9 0.5Z" fill="#000"/></svg>
<div style="left:327px;top:698px;width:1063px;height:18px;background:repeating-conic-gradient(#fff 0 25%,#d4d0c8 0 50%) 0 0/2px 2px"></div>
<div style="left:327px;top:698px;width:18px;height:18px;background:#d4d0c8;border-top:1px solid #fff;border-left:1px solid #fff;border-right:1px solid #404040;border-bottom:1px solid #404040"></div>
<svg style="left:333px;top:703px" width="6" height="9"><path d="M5 0 L0.5 4.5 L5 9Z" fill="#000"/></svg>
<div style="left:856px;top:698px;width:9px;height:18px;background:#d4d0c8;border-top:1px solid #fff;border-left:1px solid #fff;border-right:1px solid #404040;border-bottom:1px solid #404040"></div>
<div style="left:1372px;top:698px;width:18px;height:18px;background:#d4d0c8;border-top:1px solid #fff;border-left:1px solid #fff;border-right:1px solid #404040;border-bottom:1px solid #404040"></div>
<svg style="left:1379px;top:703px" width="6" height="9"><path d="M0.5 0 L5 4.5 L0.5 9Z" fill="#000"/></svg>
<div style="left:1390px;top:698px;width:17px;height:18px;background:#d4d0c8"></div>
<div style="left:327px;top:716px;width:1081px;height:1px;background:#fff"></div>
<div style="left:331px;top:721px;width:57px;height:19px;background:#fff;border:1px solid #1a2a8a"></div>
<div class="t" style="left:337px;top:726px;font-size:12px;color:#111">Проект</div>
<div style="left:6px;top:746px;width:599px;height:20px;border:1px solid #a4a19a"></div>
<div class="t" style="left:8px;top:751px;font-size:12.5px;color:#111">Готово</div>
<div style="left:607px;top:746px;width:120px;height:20px;border:1px solid #a4a19a"></div>
<div class="t" style="left:609px;top:751px;font-size:12px;color:#111">Проводная связь</div>
<div style="left:728px;top:746px;width:139px;height:20px;border:1px solid #a4a19a"></div>
<div class="t" style="left:731px;top:752px;font-size:11px;color:#111">EEPROM: 2044</div>
<div style="left:868px;top:746px;width:223px;height:20px;border:1px solid #a4a19a"></div>
<div class="t" style="left:870px;top:751px;font-size:12.2px;color:#111">Отладочная компоновка</div>
<div style="left:1092px;top:746px;width:129px;height:20px;border:1px solid #a4a19a"></div>
<div class="t" style="left:1095px;top:751px;font-size:12px;color:#111">Цикл: 100 мс</div>
<div style="left:1222px;top:746px;width:167px;height:20px;border:1px solid #a4a19a"></div>
<div class="t" style="left:1225px;top:751px;font-size:12px;color:#111">FBD: 0030; UI: 1052</div>
<svg style="left:327px;top:112px" width="1063" height="586"><g fill="#b8ccd6"><rect x="15" y="12" width="1" height="1"/><rect x="15" y="56" width="1" height="1"/><rect x="15" y="100" width="1" height="1"/><rect x="15" y="144" width="1" height="1"/><rect x="15" y="188" width="1" height="1"/><rect x="15" y="232" width="1" height="1"/><rect x="15" y="276" width="1" height="1"/><rect x="15" y="320" width="1" height="1"/><rect x="15" y="364" width="1" height="1"/><rect x="15" y="408" width="1" height="1"/><rect x="15" y="453" width="1" height="1"/><rect x="15" y="497" width="1" height="1"/><rect x="15" y="541" width="1" height="1"/><rect x="15" y="585" width="1" height="1"/><rect x="59" y="12" width="1" height="1"/><rect x="59" y="56" width="1" height="1"/><rect x="59" y="100" width="1" height="1"/><rect x="59" y="144" width="1" height="1"/><rect x="59" y="188" width="1" height="1"/><rect x="59" y="232" width="1" height="1"/><rect x="59" y="276" width="1" height="1"/><rect x="59" y="320" width="1" height="1"/><rect x="59" y="364" width="1" height="1"/><rect x="59" y="408" width="1" height="1"/><rect x="59" y="453" width="1" height="1"/><rect x="59" y="497" width="1" height="1"/><rect x="59" y="541" width="1" height="1"/><rect x="59" y="585" width="1" height="1"/><rect x="103" y="12" width="1" height="1"/><rect x="103" y="56" width="1" height="1"/><rect x="103" y="100" width="1" height="1"/><rect x="103" y="144" width="1" height="1"/><rect x="103" y="188" width="1" height="1"/><rect x="103" y="232" width="1" height="1"/><rect x="103" y="276" width="1" height="1"/><rect x="103" y="320" width="1" height="1"/><rect x="103" y="364" width="1" height="1"/><rect x="103" y="408" width="1" height="1"/><rect x="103" y="453" width="1" height="1"/><rect x="103" y="497" width="1" height="1"/><rect x="103" y="541" width="1" height="1"/><rect x="103" y="585" width="1" height="1"/><rect x="147" y="12" width="1" height="1"/><rect x="147" y="56" width="1" height="1"/><rect x="147" y="100" width="1" height="1"/><rect x="147" y="144" width="1" height="1"/><rect x="147" y="188" width="1" height="1"/><rect x="147" y="232" width="1" height="1"/><rect x="147" y="276" width="1" height="1"/><rect x="147" y="320" width="1" height="1"/><rect x="147" y="364" width="1" height="1"/><rect x="147" y="408" width="1" height="1"/><rect x="147" y="453" width="1" height="1"/><rect x="147" y="497" width="1" height="1"/><rect x="147" y="541" width="1" height="1"/><rect x="147" y="585" width="1" height="1"/><rect x="191" y="12" width="1" height="1"/><rect x="191" y="56" width="1" height="1"/><rect x="191" y="100" width="1" height="1"/><rect x="191" y="144" width="1" height="1"/><rect x="191" y="188" width="1" height="1"/><rect x="191" y="232" width="1" height="1"/><rect x="191" y="276" width="1" height="1"/><rect x="191" y="320" width="1" height="1"/><rect x="191" y="364" width="1" height="1"/><rect x="191" y="408" width="1" height="1"/><rect x="191" y="453" width="1" height="1"/><rect x="191" y="497" width="1" height="1"/><rect x="191" y="541" width="1" height="1"/><rect x="191" y="585" width="1" height="1"/><rect x="235" y="12" width="1" height="1"/><rect x="235" y="56" width="1" height="1"/><rect x="235" y="100" width="1" height="1"/><rect x="235" y="144" width="1" height="1"/><rect x="235" y="188" width="1" height="1"/><rect x="235" y="232" width="1" height="1"/><rect x="235" y="276" width="1" height="1"/><rect x="235" y="320" width="1" height="1"/><rect x="235" y="364" width="1" height="1"/><rect x="235" y="408" width="1" height="1"/><rect x="235" y="453" width="1" height="1"/><rect x="235" y="497" width="1" height="1"/><rect x="235" y="541" width="1" height="1"/><rect x="235" y="585" width="1" height="1"/><rect x="279" y="12" width="1" height="1"/><rect x="279" y="56" width="1" height="1"/><rect x="279" y="100" width="1" height="1"/><rect x="279" y="144" width="1" height="1"/><rect x="279" y="188" width="1" height="1"/><rect x="279" y="232" width="1" height="1"/><rect x="279" y="276" width="1" height="1"/><rect x="279" y="320" width="1" height="1"/><rect x="279" y="364" width="1" height="1"/><rect x="279" y="408" width="1" height="1"/><rect x="279" y="453" width="1" height="1"/><rect x="279" y="497" width="1" height="1"/><rect x="279" y="541" width="1" height="1"/><rect x="279" y="585" width="1" height="1"/><rect x="323" y="12" width="1" height="1"/><rect x="323" y="56" width="1" height="1"/><rect x="323" y="100" width="1" height="1"/><rect x="323" y="144" width="1" height="1"/><rect x="323" y="188" width="1" height="1"/><rect x="323" y="232" width="1" height="1"/><rect x="323" y="276" width="1" height="1"/><rect x="323" y="320" width="1" height="1"/><rect x="323" y="364" width="1" height="1"/><rect x="323" y="408" width="1" height="1"/><rect x="323" y="453" width="1" height="1"/><rect x="323" y="497" width="1" height="1"/><rect x="323" y="541" width="1" height="1"/><rect x="323" y="585" width="1" height="1"/><rect x="366" y="12" width="1" height="1"/><rect x="366" y="56" width="1" height="1"/><rect x="366" y="100" width="1" height="1"/><rect x="366" y="144" width="1" height="1"/><rect x="366" y="188" width="1" height="1"/><rect x="366" y="232" width="1" height="1"/><rect x="366" y="276" width="1" height="1"/><rect x="366" y="320" width="1" height="1"/><rect x="366" y="364" width="1" height="1"/><rect x="366" y="408" width="1" height="1"/><rect x="366" y="453" width="1" height="1"/><rect x="366" y="497" width="1" height="1"/><rect x="366" y="541" width="1" height="1"/><rect x="366" y="585" width="1" height="1"/><rect x="410" y="12" width="1" height="1"/><rect x="410" y="56" width="1" height="1"/><rect x="410" y="100" width="1" height="1"/><rect x="410" y="144" width="1" height="1"/><rect x="410" y="188" width="1" height="1"/><rect x="410" y="232" width="1" height="1"/><rect x="410" y="276" width="1" height="1"/><rect x="410" y="320" width="1" height="1"/><rect x="410" y="364" width="1" height="1"/><rect x="410" y="408" width="1" height="1"/><rect x="410" y="453" width="1" height="1"/><rect x="410" y="497" width="1" height="1"/><rect x="410" y="541" width="1" height="1"/><rect x="410" y="585" width="1" height="1"/><rect x="454" y="12" width="1" height="1"/><rect x="454" y="56" width="1" height="1"/><rect x="454" y="100" width="1" height="1"/><rect x="454" y="144" width="1" height="1"/><rect x="454" y="188" width="1" height="1"/><rect x="454" y="232" width="1" height="1"/><rect x="454" y="276" width="1" height="1"/><rect x="454" y="320" width="1" height="1"/><rect x="454" y="364" width="1" height="1"/><rect x="454" y="408" width="1" height="1"/><rect x="454" y="453" width="1" height="1"/><rect x="454" y="497" width="1" height="1"/><rect x="454" y="541" width="1" height="1"/><rect x="454" y="585" width="1" height="1"/><rect x="498" y="12" width="1" height="1"/><rect x="498" y="56" width="1" height="1"/><rect x="498" y="100" width="1" height="1"/><rect x="498" y="144" width="1" height="1"/><rect x="498" y="188" width="1" height="1"/><rect x="498" y="232" width="1" height="1"/><rect x="498" y="276" width="1" height="1"/><rect x="498" y="320" width="1" height="1"/><rect x="498" y="364" width="1" height="1"/><rect x="498" y="408" width="1" height="1"/><rect x="498" y="453" width="1" height="1"/><rect x="498" y="497" width="1" height="1"/><rect x="498" y="541" width="1" height="1"/><rect x="498" y="585" width="1" height="1"/><rect x="542" y="12" width="1" height="1"/><rect x="542" y="56" width="1" height="1"/><rect x="542" y="100" width="1" height="1"/><rect x="542" y="144" width="1" height="1"/><rect x="542" y="188" width="1" height="1"/><rect x="542" y="232" width="1" height="1"/><rect x="542" y="276" width="1" height="1"/><rect x="542" y="320" width="1" height="1"/><rect x="542" y="364" width="1" height="1"/><rect x="542" y="408" width="1" height="1"/><rect x="542" y="453" width="1" height="1"/><rect x="542" y="497" width="1" height="1"/><rect x="542" y="541" width="1" height="1"/><rect x="542" y="585" width="1" height="1"/><rect x="586" y="12" width="1" height="1"/><rect x="586" y="56" width="1" height="1"/><rect x="586" y="100" width="1" height="1"/><rect x="586" y="144" width="1" height="1"/><rect x="586" y="188" width="1" height="1"/><rect x="586" y="232" width="1" height="1"/><rect x="586" y="276" width="1" height="1"/><rect x="586" y="320" width="1" height="1"/><rect x="586" y="364" width="1" height="1"/><rect x="586" y="408" width="1" height="1"/><rect x="586" y="453" width="1" height="1"/><rect x="586" y="497" width="1" height="1"/><rect x="586" y="541" width="1" height="1"/><rect x="586" y="585" width="1" height="1"/><rect x="630" y="12" width="1" height="1"/><rect x="630" y="56" width="1" height="1"/><rect x="630" y="100" width="1" height="1"/><rect x="630" y="144" width="1" height="1"/><rect x="630" y="188" width="1" height="1"/><rect x="630" y="232" width="1" height="1"/><rect x="630" y="276" width="1" height="1"/><rect x="630" y="320" width="1" height="1"/><rect x="630" y="364" width="1" height="1"/><rect x="630" y="408" width="1" height="1"/><rect x="630" y="453" width="1" height="1"/><rect x="630" y="497" width="1" height="1"/><rect x="630" y="541" width="1" height="1"/><rect x="630" y="585" width="1" height="1"/><rect x="674" y="12" width="1" height="1"/><rect x="674" y="56" width="1" height="1"/><rect x="674" y="100" width="1" height="1"/><rect x="674" y="144" width="1" height="1"/><rect x="674" y="188" width="1" height="1"/><rect x="674" y="232" width="1" height="1"/><rect x="674" y="276" width="1" height="1"/><rect x="674" y="320" width="1" height="1"/><rect x="674" y="364" width="1" height="1"/><rect x="674" y="408" width="1" height="1"/><rect x="674" y="453" width="1" height="1"/><rect x="674" y="497" width="1" height="1"/><rect x="674" y="541" width="1" height="1"/><rect x="674" y="585" width="1" height="1"/><rect x="717" y="12" width="1" height="1"/><rect x="717" y="56" width="1" height="1"/><rect x="717" y="100" width="1" height="1"/><rect x="717" y="144" width="1" height="1"/><rect x="717" y="188" width="1" height="1"/><rect x="717" y="232" width="1" height="1"/><rect x="717" y="276" width="1" height="1"/><rect x="717" y="320" width="1" height="1"/><rect x="717" y="364" width="1" height="1"/><rect x="717" y="408" width="1" height="1"/><rect x="717" y="453" width="1" height="1"/><rect x="717" y="497" width="1" height="1"/><rect x="717" y="541" width="1" height="1"/><rect x="717" y="585" width="1" height="1"/><rect x="761" y="12" width="1" height="1"/><rect x="761" y="56" width="1" height="1"/><rect x="761" y="100" width="1" height="1"/><rect x="761" y="144" width="1" height="1"/><rect x="761" y="188" width="1" height="1"/><rect x="761" y="232" width="1" height="1"/><rect x="761" y="276" width="1" height="1"/><rect x="761" y="320" width="1" height="1"/><rect x="761" y="364" width="1" height="1"/><rect x="761" y="408" width="1" height="1"/><rect x="761" y="453" width="1" height="1"/><rect x="761" y="497" width="1" height="1"/><rect x="761" y="541" width="1" height="1"/><rect x="761" y="585" width="1" height="1"/><rect x="805" y="12" width="1" height="1"/><rect x="805" y="56" width="1" height="1"/><rect x="805" y="100" width="1" height="1"/><rect x="805" y="144" width="1" height="1"/><rect x="805" y="188" width="1" height="1"/><rect x="805" y="232" width="1" height="1"/><rect x="805" y="276" width="1" height="1"/><rect x="805" y="320" width="1" height="1"/><rect x="805" y="364" width="1" height="1"/><rect x="805" y="408" width="1" height="1"/><rect x="805" y="453" width="1" height="1"/><rect x="805" y="497" width="1" height="1"/><rect x="805" y="541" width="1" height="1"/><rect x="805" y="585" width="1" height="1"/><rect x="849" y="12" width="1" height="1"/><rect x="849" y="56" width="1" height="1"/><rect x="849" y="100" width="1" height="1"/><rect x="849" y="144" width="1" height="1"/><rect x="849" y="188" width="1" height="1"/><rect x="849" y="232" width="1" height="1"/><rect x="849" y="276" width="1" height="1"/><rect x="849" y="320" width="1" height="1"/><rect x="849" y="364" width="1" height="1"/><rect x="849" y="408" width="1" height="1"/><rect x="849" y="453" width="1" height="1"/><rect x="849" y="497" width="1" height="1"/><rect x="849" y="541" width="1" height="1"/><rect x="849" y="585" width="1" height="1"/><rect x="893" y="12" width="1" height="1"/><rect x="893" y="56" width="1" height="1"/><rect x="893" y="100" width="1" height="1"/><rect x="893" y="144" width="1" height="1"/><rect x="893" y="188" width="1" height="1"/><rect x="893" y="232" width="1" height="1"/><rect x="893" y="276" width="1" height="1"/><rect x="893" y="320" width="1" height="1"/><rect x="893" y="364" width="1" height="1"/><rect x="893" y="408" width="1" height="1"/><rect x="893" y="453" width="1" height="1"/><rect x="893" y="497" width="1" height="1"/><rect x="893" y="541" width="1" height="1"/><rect x="893" y="585" width="1" height="1"/><rect x="937" y="12" width="1" height="1"/><rect x="937" y="56" width="1" height="1"/><rect x="937" y="100" width="1" height="1"/><rect x="937" y="144" width="1" height="1"/><rect x="937" y="188" width="1" height="1"/><rect x="937" y="232" width="1" height="1"/><rect x="937" y="276" width="1" height="1"/><rect x="937" y="320" width="1" height="1"/><rect x="937" y="364" width="1" height="1"/><rect x="937" y="408" width="1" height="1"/><rect x="937" y="453" width="1" height="1"/><rect x="937" y="497" width="1" height="1"/><rect x="937" y="541" width="1" height="1"/><rect x="937" y="585" width="1" height="1"/><rect x="981" y="12" width="1" height="1"/><rect x="981" y="56" width="1" height="1"/><rect x="981" y="100" width="1" height="1"/><rect x="981" y="144" width="1" height="1"/><rect x="981" y="188" width="1" height="1"/><rect x="981" y="232" width="1" height="1"/><rect x="981" y="276" width="1" height="1"/><rect x="981" y="320" width="1" height="1"/><rect x="981" y="364" width="1" height="1"/><rect x="981" y="408" width="1" height="1"/><rect x="981" y="453" width="1" height="1"/><rect x="981" y="497" width="1" height="1"/><rect x="981" y="541" width="1" height="1"/><rect x="981" y="585" width="1" height="1"/><rect x="1025" y="12" width="1" height="1"/><rect x="1025" y="56" width="1" height="1"/><rect x="1025" y="100" width="1" height="1"/><rect x="1025" y="144" width="1" height="1"/><rect x="1025" y="188" width="1" height="1"/><rect x="1025" y="232" width="1" height="1"/><rect x="1025" y="276" width="1" height="1"/><rect x="1025" y="320" width="1" height="1"/><rect x="1025" y="364" width="1" height="1"/><rect x="1025" y="408" width="1" height="1"/><rect x="1025" y="453" width="1" height="1"/><rect x="1025" y="497" width="1" height="1"/><rect x="1025" y="541" width="1" height="1"/><rect x="1025" y="585" width="1" height="1"/></g></svg>
<div style="left:387px;top:132px;width:70px;height:25px;background:#12364a;border:1px solid #9a9a9a;border-bottom:none;"></div>
<div class="t" style="left:388.00px;top:134.00px;font-size:15px;color:#d6d6d6;letter-spacing:0px;">Дверь</div>
<div style="left:361px;top:157px;width:131px;height:33px;background:#226818;border:1.5px solid #c4c4c4"></div>
<div class="t" style="left:361.00px;top:161.00px;width:131px;text-align:center;font-size:11.7px;font-weight:bold;color:#f4f0dc;">DIN1</div>
<div class="t" style="left:361.00px;top:174.00px;width:131px;text-align:center;font-size:11.7px;font-weight:bold;color:#f4f0dc;">PIXEL2</div>
<div style="left:498px;top:136px;width:24px;height:10px;background:#403641"></div>
<div class="t" style="left:490.00px;top:135.00px;width:40px;text-align:center;font-size:13px;font-weight:bold;color:#d23cb4;">1</div>
<div style="left:495px;top:157px;width:27px;height:12px;background:#403641"></div>
<div class="t" style="left:488.50px;top:158.00px;width:40px;text-align:center;font-size:13px;font-weight:bold;color:#4fb2e6;">Q</div>
<div style="left:492px;top:173.5px;width:8px;height:1px;background:#c8c8c8"></div>
<svg style="left:494px;top:168px" width="12" height="12"><circle cx="6" cy="6" r="3.4" fill="#d80000" stroke="#e6dcdc" stroke-width="1.1"/></svg>
<div style="left:500px;top:173.5px;width:17px;height:1px;background:#f0f0f0"></div>
<div style="left:506.0px;top:172.0px;width:4px;height:4px;background:#f0f0f0"></div>
<svg style="left:511px;top:168px" width="12" height="12"><circle cx="6" cy="6" r="3.4" fill="#d80000" stroke="#c4b450" stroke-width="1.1"/></svg>
<div style="left:520px;top:173.5px;width:4px;height:1px;background:#c9c25e"></div>
<svg style="left:511px;top:146px" width="12" height="12"><circle cx="6" cy="6" r="3.4" fill="#d80000" stroke="#c4b450" stroke-width="1.1"/></svg>
<div style="left:520px;top:151.5px;width:4px;height:1px;background:#c9c25e"></div>
<div style="left:524px;top:130px;width:77px;height:66px;background:#3a3514;border:1px solid #c9c25e"></div>
<div class="t" style="left:524.00px;top:134.00px;width:77px;text-align:center;font-size:11.5px;font-weight:bold;color:#fff;">XOR</div>
<div class="t" style="left:524.00px;top:183.00px;width:77px;text-align:center;font-size:10.5px;color:#e6e1cc;">6</div>
<div class="t" style="left:528.00px;top:148.00px;font-size:11.5px;color:#e6e1cc;">in0</div>
<div class="t" style="left:528.00px;top:169.00px;font-size:11.5px;color:#e6e1cc;">in1</div>
<div class="t" style="left:557.00px;top:158.00px;width:40px;text-align:right;font-size:12px;color:#e6e1cc;">out</div>
<div style="left:601px;top:163.5px;width:5px;height:1px;background:#c9c25e"></div>
<svg style="left:603px;top:158px" width="12" height="12"><circle cx="6" cy="6" r="3.4" fill="#d80000" stroke="#c4b450" stroke-width="1.1"/></svg>
<div style="left:603px;top:147px;width:24px;height:10px;background:#403641"></div>
<div class="t" style="left:595.00px;top:146.00px;width:40px;text-align:center;font-size:13px;font-weight:bold;color:#d23cb4;">1</div>
<svg style="left:613px;top:158px" width="39" height="12"><path d="M0 0 H33 L39 6.0 L33 12 H0Z" fill="#fff"/></svg>
<div class="t" style="left:615.00px;top:159.00px;font-size:11px;color:#1e1c34;">DIN1</div>
<svg style="left:665px;top:157.5px" width="44" height="12.5"><path d="M0 0 H44 V12.5 H0 L6 6.25Z" fill="#fff"/></svg>
<div class="t" style="left:648.00px;top:159.00px;width:60px;text-align:right;font-size:11px;color:#1e1c34;">DIN1</div>
<div style="left:694px;top:146.5px;width:24px;height:10.5px;background:#403641"></div>
<div class="t" style="left:686.00px;top:146.00px;width:40px;text-align:center;font-size:13px;font-weight:bold;color:#d23cb4;">1</div>
<svg style="left:707px;top:158px" width="12" height="12"><circle cx="6" cy="6" r="3.4" fill="#d80000" stroke="#c4b450" stroke-width="1.1"/></svg>
<div style="left:716px;top:163.5px;width:4px;height:1px;background:#c9c25e"></div>
<div style="left:720px;top:141px;width:77px;height:44px;background:#3a3514;border:1px solid #c9c25e"></div>
<div class="t" style="left:720.00px;top:145.00px;width:77px;text-align:center;font-size:11.5px;font-weight:bold;color:#fff;">bool->int</div>
<div class="t" style="left:720.00px;top:171.00px;width:77px;text-align:center;font-size:10.5px;color:#e6e1cc;">14</div>
<div class="t" style="left:724.00px;top:158.00px;font-size:11.5px;color:#e6e1cc;">bool0*</div>
<div class="t" style="left:753.00px;top:157.00px;width:40px;text-align:right;font-size:12px;color:#e6e1cc;">int</div>
<div style="left:797px;top:163.5px;width:5px;height:1px;background:#c9c25e"></div>
<div style="left:799px;top:146px;width:30px;height:11px;background:#403641"></div>
<div class="t" style="left:794.00px;top:146.00px;width:40px;text-align:center;font-size:13px;font-weight:bold;color:#3fc23f;">1</div>
<svg style="left:799px;top:158px" width="12" height="12"><circle cx="6" cy="6" r="3.4" fill="#48b848" stroke="#9ad070" stroke-width="1.1"/></svg>
<div style="left:808px;top:163.5px;width:16px;height:1px;background:#e0e0e0"></div>
<div style="left:811.5px;top:162.0px;width:5px;height:4px;background:#f0f0f0"></div>
<svg style="left:818px;top:158px" width="12" height="12"><circle cx="6" cy="6" r="2.8" fill="#48b848" stroke="#9ad070" stroke-width="1.1"/></svg>
<div style="left:831px;top:130px;width:220px;height:44px;background:#0d2a64;border:1px solid #0a1848"></div>
<div style="left:831px;top:130px;width:220px;height:21px;background:#14323f;border:1px solid #0a1848;overflow:hidden"><div class="t" style="left:6px;top:3px;font-size:12.2px;font-weight:bold;color:#7894a4">\ Экран Пульт \ Вывод числа DI1  \</div></div>
<div class="t" style="left:836.00px;top:157.00px;font-size:10.8px;color:#f0f0f4;">Переменная DI1</div>
<div style="left:387px;top:208px;width:70px;height:21px;background:#12364a;border:1px solid #9a9a9a;"></div>
<div class="t" style="left:388.00px;top:210.00px;font-size:15px;color:#d6d6d6;letter-spacing:0px;">Охрана</div>
<div style="left:360px;top:231px;width:131px;height:33px;background:#226818;border:1.5px solid #c4c4c4"></div>
<div class="t" style="left:360.00px;top:234.00px;width:131px;text-align:center;font-size:11.7px;font-weight:bold;color:#f4f0dc;">DIN2</div>
<div class="t" style="left:360.00px;top:248.00px;width:131px;text-align:center;font-size:11.7px;font-weight:bold;color:#f4f0dc;">PIXEL2</div>
<div style="left:499px;top:212px;width:23px;height:11px;background:#403641"></div>
<div class="t" style="left:490.50px;top:212.00px;width:40px;text-align:center;font-size:13px;font-weight:bold;color:#d23cb4;">1</div>
<div style="left:493px;top:232px;width:29px;height:12px;background:#403641"></div>
<div class="t" style="left:487.50px;top:233.00px;width:40px;text-align:center;font-size:13px;font-weight:bold;color:#4fb2e6;">Q</div>
<div style="left:491px;top:246.5px;width:9px;height:1px;background:#c8c8c8"></div>
<svg style="left:494px;top:241px" width="12" height="12"><circle cx="6" cy="6" r="3.4" fill="#d80000" stroke="#e6dcdc" stroke-width="1.1"/></svg>
<div style="left:500px;top:246.5px;width:9px;height:1px;background:#f0f0f0"></div>
<div style="left:507.0px;top:244.5px;width:4px;height:7px;background:#f0f0f0"></div>
<div style="left:509px;top:250.5px;width:9px;height:1px;background:#f0f0f0"></div>
<svg style="left:512px;top:245px" width="12" height="12"><circle cx="6" cy="6" r="3.4" fill="#d80000" stroke="#c4b450" stroke-width="1.1"/></svg>
<div style="left:521px;top:250.5px;width:4px;height:1px;background:#c9c25e"></div>
<svg style="left:512px;top:222.5px" width="12" height="12"><circle cx="6" cy="6" r="3.4" fill="#d80000" stroke="#c4b450" stroke-width="1.1"/></svg>
<div style="left:521px;top:228.0px;width:4px;height:1px;background:#c9c25e"></div>
<div style="left:525px;top:206px;width:77px;height:66px;background:#3a3514;border:1px solid #c9c25e"></div>
<div class="t" style="left:525.00px;top:210.00px;width:77px;text-align:center;font-size:11.5px;font-weight:bold;color:#fff;">XOR</div>
<div class="t" style="left:525.00px;top:259.00px;width:77px;text-align:center;font-size:10.5px;color:#e6e1cc;">7</div>
<div class="t" style="left:529.00px;top:224.00px;font-size:11.5px;color:#e6e1cc;">in0</div>
<div class="t" style="left:529.00px;top:245.00px;font-size:11.5px;color:#e6e1cc;">in1</div>
<div class="t" style="left:558.00px;top:234.00px;width:40px;text-align:right;font-size:12px;color:#e6e1cc;">out</div>
<div style="left:602px;top:239.5px;width:5px;height:1px;background:#c9c25e"></div>
<svg style="left:604px;top:234px" width="12" height="12"><circle cx="6" cy="6" r="3.4" fill="#d80000" stroke="#c4b450" stroke-width="1.1"/></svg>
<div style="left:605px;top:223px;width:23px;height:11px;background:#403641"></div>
<div class="t" style="left:596.50px;top:223.00px;width:40px;text-align:center;font-size:13px;font-weight:bold;color:#d23cb4;">1</div>
<svg style="left:614px;top:234px" width="38" height="12"><path d="M0 0 H32 L38 6.0 L32 12 H0Z" fill="#fff"/></svg>
<div class="t" style="left:616.00px;top:235.00px;font-size:11px;color:#1e1c34;">DIN2</div>
<svg style="left:664px;top:231.4px" width="44" height="12.199999999999989"><path d="M0 0 H44 V12.199999999999989 H0 L6 6.099999999999994Z" fill="#fff"/></svg>
<div class="t" style="left:647.00px;top:233.00px;width:60px;text-align:right;font-size:11px;color:#1e1c34;">DIN2</div>
<div style="left:693px;top:220.5px;width:25px;height:10.900000000000006px;background:#403641"></div>
<div class="t" style="left:685.50px;top:220.00px;width:40px;text-align:center;font-size:13px;font-weight:bold;color:#d23cb4;">1</div>
<svg style="left:706.5px;top:231.3px" width="12" height="12"><circle cx="6" cy="6" r="3.4" fill="#d80000" stroke="#c4b450" stroke-width="1.1"/></svg>
<div style="left:715px;top:236.8px;width:4px;height:1px;background:#c9c25e"></div>
<div style="left:719px;top:215px;width:77px;height:44px;background:#3a3514;border:1px solid #c9c25e"></div>
<div class="t" style="left:719.00px;top:219.00px;width:77px;text-align:center;font-size:11.5px;font-weight:bold;color:#fff;">bool->int</div>
<div class="t" style="left:719.00px;top:245.00px;width:77px;text-align:center;font-size:10.5px;color:#e6e1cc;">13</div>
<div class="t" style="left:723.00px;top:232.00px;font-size:11.5px;color:#e6e1cc;">bool0*</div>
<div class="t" style="left:752.00px;top:231.00px;width:40px;text-align:right;font-size:12px;color:#e6e1cc;">int</div>
<div style="left:796px;top:236.9px;width:5px;height:1px;background:#c9c25e"></div>
<div style="left:798px;top:218.4px;width:25.5px;height:13.0px;background:#403641"></div>
<div class="t" style="left:790.75px;top:220.00px;width:40px;text-align:center;font-size:13px;font-weight:bold;color:#3fc23f;">1</div>
<svg style="left:798.4px;top:231.4px" width="12" height="12"><circle cx="6" cy="6" r="3.4" fill="#48b848" stroke="#9ad070" stroke-width="1.1"/></svg>
<div style="left:807px;top:235.5px;width:11px;height:1px;background:#e0e0e0"></div>
<div style="left:809.4px;top:234.9px;width:4px;height:5px;background:#f0f0f0"></div>
<svg style="left:812.3px;top:229.4px" width="12" height="12"><circle cx="6" cy="6" r="2.8" fill="#48b848" stroke="#9ad070" stroke-width="1.1"/></svg>
<div style="left:826px;top:203px;width:219px;height:44px;background:#0d2a64;border:1px solid #0a1848"></div>
<div style="left:826px;top:203px;width:219px;height:21.5px;background:#14323f;border:1px solid #0a1848;overflow:hidden"><div class="t" style="left:6px;top:3px;font-size:12.2px;font-weight:bold;color:#7894a4">\ Экран Пульт \ Вывод числа DI1  (1</div></div>
<div class="t" style="left:831.00px;top:231.00px;font-size:10.8px;color:#f0f0f4;">Переменная DI2</div>
<svg style="left:470px;top:301px" width="44" height="11.300000000000011"><path d="M0 0 H44 V11.300000000000011 H0 L6 5.650000000000006Z" fill="#fff"/></svg>
<div class="t" style="left:453.00px;top:301.00px;width:60px;text-align:right;font-size:11px;color:#1e1c34;">DIN1</div>
<svg style="left:470px;top:323.3px" width="44" height="11.399999999999977"><path d="M0 0 H44 V11.399999999999977 H0 L6 5.699999999999989Z" fill="#fff"/></svg>
<div class="t" style="left:453.00px;top:324.00px;width:60px;text-align:right;font-size:11px;color:#1e1c34;">DIN2</div>
<div style="left:499px;top:290.6px;width:24px;height:9.799999999999955px;background:#403641"></div>
<div class="t" style="left:491.00px;top:289.00px;width:40px;text-align:center;font-size:13px;font-weight:bold;color:#d23cb4;">1</div>
<div style="left:499px;top:312.6px;width:24px;height:10.199999999999989px;background:#403641"></div>
<div class="t" style="left:491.00px;top:312.00px;width:40px;text-align:center;font-size:13px;font-weight:bold;color:#d23cb4;">1</div>
<svg style="left:512px;top:301px" width="12" height="12"><circle cx="6" cy="6" r="3.4" fill="#d80000" stroke="#c4b450" stroke-width="1.1"/></svg>
<div style="left:521px;top:306.5px;width:4px;height:1px;background:#c9c25e"></div>
<svg style="left:512px;top:323.2px" width="12" height="12"><circle cx="6" cy="6" r="3.4" fill="#d80000" stroke="#c4b450" stroke-width="1.1"/></svg>
<div style="left:521px;top:328.7px;width:4px;height:1px;background:#c9c25e"></div>
<div style="left:525px;top:285px;width:77px;height:65px;background:#3a3514;border:1px solid #c9c25e"></div>
<div class="t" style="left:525.00px;top:288.00px;width:77px;text-align:center;font-size:11.5px;font-weight:bold;color:#fff;">AND</div>
<div class="t" style="left:525.00px;top:337.00px;width:77px;text-align:center;font-size:10.5px;color:#e6e1cc;">8</div>
<div class="t" style="left:529.00px;top:302.00px;font-size:11.5px;color:#e6e1cc;">in0</div>
<div class="t" style="left:529.00px;top:324.00px;font-size:11.5px;color:#e6e1cc;">in1*</div>
<div class="t" style="left:558.00px;top:312.00px;width:40px;text-align:right;font-size:12px;color:#e6e1cc;">out</div>
<div style="left:602px;top:317.7px;width:5px;height:1px;background:#c9c25e"></div>
<svg style="left:604px;top:312.2px" width="12" height="12"><circle cx="6" cy="6" r="3.4" fill="#d80000" stroke="#c4b450" stroke-width="1.1"/></svg>
<div style="left:604.4px;top:301.3px;width:23.600000000000023px;height:9.300000000000011px;background:#403641"></div>
<div class="t" style="left:596.20px;top:300.00px;width:40px;text-align:center;font-size:13px;font-weight:bold;color:#d23cb4;">1</div>
<svg style="left:614px;top:312.3px" width="49.39999999999998" height="11.899999999999977"><path d="M0 0 H43.39999999999998 L49.39999999999998 5.949999999999989 L43.39999999999998 11.899999999999977 H0Z" fill="#fff"/></svg>
<div class="t" style="left:616.00px;top:313.00px;font-size:11px;color:#1e1c34;">DOUT4</div>
<svg style="left:655px;top:293.4px" width="54" height="11.800000000000011"><path d="M0 0 H54 V11.800000000000011 H0 L6 5.900000000000006Z" fill="#fff"/></svg>
<div class="t" style="left:648.00px;top:294.00px;width:60px;text-align:right;font-size:11px;color:#1e1c34;">DOUT4</div>
<div style="left:694px;top:282.6px;width:24.5px;height:10.799999999999955px;background:#403641"></div>
<div class="t" style="left:686.25px;top:282.00px;width:40px;text-align:center;font-size:13px;font-weight:bold;color:#d23cb4;">1</div>
<svg style="left:707.3px;top:293.1px" width="12" height="12"><circle cx="6" cy="6" r="3.4" fill="#d80000" stroke="#c4b450" stroke-width="1.1"/></svg>
<div style="left:716px;top:298.6px;width:4px;height:1px;background:#c9c25e"></div>
<div style="left:720px;top:277px;width:77px;height:43px;background:#3a3514;border:1px solid #c9c25e"></div>
<div class="t" style="left:720.00px;top:281.00px;width:77px;text-align:center;font-size:11.5px;font-weight:bold;color:#fff;">bool->int</div>
<div class="t" style="left:720.00px;top:307.00px;width:77px;text-align:center;font-size:10.5px;color:#e6e1cc;">15</div>
<div class="t" style="left:724.00px;top:294.00px;font-size:11.5px;color:#e6e1cc;">bool0*</div>
<div class="t" style="left:753.00px;top:293.00px;width:40px;text-align:right;font-size:12px;color:#e6e1cc;">int</div>
<div style="left:797px;top:298.8px;width:5px;height:1px;background:#c9c25e"></div>
<div style="left:799.6px;top:278px;width:24.799999999999955px;height:15px;background:#403641"></div>
<div class="t" style="left:792.00px;top:282.00px;width:40px;text-align:center;font-size:13px;font-weight:bold;color:#3fc23f;">1</div>
<svg style="left:799.3px;top:293.3px" width="12" height="12"><circle cx="6" cy="6" r="3.4" fill="#48b848" stroke="#9ad070" stroke-width="1.1"/></svg>
<div style="left:808px;top:298.8px;width:4px;height:1px;background:#e0e0e0"></div>
<div style="left:810.2px;top:293.0px;width:4px;height:8px;background:#f0f0f0"></div>
<div style="left:812px;top:294.3px;width:8px;height:1px;background:#e0e0e0"></div>
<svg style="left:813.7px;top:288.8px" width="12" height="12"><circle cx="6" cy="6" r="2.8" fill="#48b848" stroke="#9ad070" stroke-width="1.1"/></svg>
<div style="left:827px;top:263px;width:219px;height:43px;background:#0d2a64;border:1px solid #0a1848"></div>
<div style="left:827px;top:263px;width:219px;height:20.5px;background:#14323f;border:1px solid #0a1848;overflow:hidden"><div class="t" style="left:6px;top:3px;font-size:12.2px;font-weight:bold;color:#7894a4">\ Экран Пульт \ Вывод числа DO4 \</div></div>
<div class="t" style="left:832.00px;top:289.00px;font-size:10.8px;color:#f0f0f4;">Переменная DO4</div>
<div style="left:728px;top:371.5px;width:119px;height:20.0px;background:#12364a;border:1px solid #9a9a9a;border-bottom:none;"></div>
<div class="t" style="left:729.00px;top:374.00px;font-size:14px;color:#d6d6d6;letter-spacing:1.05px;">Сигнализация</div>
<div style="left:720px;top:391px;width:131px;height:33px;background:#226818;border:1.5px solid #c4c4c4"></div>
<div class="t" style="left:720.00px;top:396.00px;width:131px;text-align:center;font-size:11.7px;font-weight:bold;color:#f4f0dc;">DOUT4</div>
<div class="t" style="left:720.00px;top:409.00px;width:131px;text-align:center;font-size:11.7px;font-weight:bold;color:#f4f0dc;">PIXEL2</div>
<svg style="left:654px;top:402.3px" width="54.5" height="12.399999999999977"><path d="M0 0 H54.5 V12.399999999999977 H0 L6 6.199999999999989Z" fill="#fff"/></svg>
<div class="t" style="left:647.50px;top:404.00px;width:60px;text-align:right;font-size:11px;color:#1e1c34;">DOUT4</div>
<div style="left:693.5px;top:391.7px;width:24.0px;height:10.600000000000023px;background:#403641"></div>
<div class="t" style="left:685.50px;top:391.00px;width:40px;text-align:center;font-size:13px;font-weight:bold;color:#d23cb4;">1</div>
<div style="left:715px;top:408.0px;width:5px;height:1px;background:#d8d8d8"></div>
<svg style="left:706.8px;top:402.5px" width="12" height="12"><circle cx="6" cy="6" r="3.4" fill="#d80000" stroke="#e6dcdc" stroke-width="1.1"/></svg>
<div style="left:720px;top:436px;width:131px;height:32px;background:#226818;border:1.5px solid #c4c4c4"></div>
<div class="t" style="left:720.00px;top:440.00px;width:131px;text-align:center;font-size:11.7px;font-weight:bold;color:#f4f0dc;">buzzer0</div>
<div class="t" style="left:720.00px;top:453.00px;width:131px;text-align:center;font-size:11.7px;font-weight:bold;color:#f4f0dc;">PIXEL2</div>
<svg style="left:654px;top:446.6px" width="54.5" height="12.099999999999966"><path d="M0 0 H54.5 V12.099999999999966 H0 L6 6.049999999999983Z" fill="#fff"/></svg>
<div class="t" style="left:647.50px;top:448.00px;width:60px;text-align:right;font-size:11px;color:#1e1c34;">DOUT4</div>
<div style="left:693.5px;top:435.7px;width:24.0px;height:10.900000000000034px;background:#403641"></div>
<div class="t" style="left:685.50px;top:436.00px;width:40px;text-align:center;font-size:13px;font-weight:bold;color:#d23cb4;">1</div>
<div style="left:715px;top:452.3px;width:5px;height:1px;background:#d8d8d8"></div>
<svg style="left:706.8px;top:446.8px" width="12" height="12"><circle cx="6" cy="6" r="3.4" fill="#d80000" stroke="#e6dcdc" stroke-width="1.1"/></svg>
<div style="left:720px;top:478px;width:131px;height:32px;background:#226818;border:1.5px solid #c4c4c4"></div>
<div class="t" style="left:720.00px;top:482.00px;width:131px;text-align:center;font-size:11.7px;font-weight:bold;color:#f4f0dc;">led0 [Red]</div>
<div class="t" style="left:720.00px;top:494.00px;width:131px;text-align:center;font-size:11.7px;font-weight:bold;color:#f4f0dc;">PIXEL2</div>
<svg style="left:654px;top:488.5px" width="54.5" height="12.199999999999989"><path d="M0 0 H54.5 V12.199999999999989 H0 L6 6.099999999999994Z" fill="#fff"/></svg>
<div class="t" style="left:647.50px;top:490.00px;width:60px;text-align:right;font-size:11px;color:#1e1c34;">DOUT4</div>
<div style="left:693.5px;top:477.3px;width:24.0px;height:10.699999999999989px;background:#403641"></div>
<div class="t" style="left:685.50px;top:477.00px;width:40px;text-align:center;font-size:13px;font-weight:bold;color:#d23cb4;">1</div>
<div style="left:715px;top:493.8px;width:5px;height:1px;background:#d8d8d8"></div>
<svg style="left:706.8px;top:488.3px" width="12" height="12"><circle cx="6" cy="6" r="3.4" fill="#d80000" stroke="#e6dcdc" stroke-width="1.1"/></svg>
<svg style="left:541.6px;top:535px" width="54.69999999999993" height="12"><path d="M0 0 H54.69999999999993 V12 H0 L6 6.0Z" fill="#fff"/></svg>
<div class="t" style="left:535.30px;top:536.00px;width:60px;text-align:right;font-size:11px;color:#1e1c34;">DOUT4</div>
<div style="left:581px;top:524px;width:24.200000000000045px;height:11px;background:#403641"></div>
<div class="t" style="left:573.10px;top:524.00px;width:40px;text-align:center;font-size:13px;font-weight:bold;color:#d23cb4;">1</div>
<svg style="left:594.6px;top:534.9px" width="12" height="12"><circle cx="6" cy="6" r="3.4" fill="#d80000" stroke="#c4b450" stroke-width="1.1"/></svg>
<div style="left:603px;top:540.4px;width:5px;height:1px;background:#c9c25e"></div>
<div style="left:608px;top:518.5px;width:76px;height:43.5px;background:#3a3514;border:1px solid #c9c25e"></div>
<div class="t" style="left:608.00px;top:522.00px;width:76px;text-align:center;font-size:11.5px;font-weight:bold;color:#fff;">NOT</div>
<div class="t" style="left:608.00px;top:549.00px;width:76px;text-align:center;font-size:10.5px;color:#e6e1cc;">10</div>
<div class="t" style="left:612.00px;top:536.00px;font-size:11.5px;color:#e6e1cc;">in</div>
<div class="t" style="left:640.00px;top:535.00px;width:40px;text-align:right;font-size:12px;color:#e6e1cc;">out</div>
<div style="left:684px;top:540.4px;width:5px;height:1px;background:#c9c25e"></div>
<div style="left:686.5px;top:524px;width:30.5px;height:12.299999999999955px;background:#403641"></div>
<div class="t" style="left:681.75px;top:525.00px;width:40px;text-align:center;font-size:13px;font-weight:bold;color:#4fb2e6;">0</div>
<div style="left:692px;top:541.0px;width:20px;height:1px;background:#e0e0e0"></div>
<svg style="left:686.4px;top:534.9px" width="12" height="12"><circle cx="6" cy="6" r="3.4" fill="#d80000" stroke="#c4b450" stroke-width="1.1"/></svg>
<div style="left:700.6px;top:539.0px;width:4px;height:5px;background:#f0f0f0"></div>
<svg style="left:706.5px;top:535.9px" width="12" height="12"><circle cx="6" cy="6" r="3.4" fill="#d80000" stroke="#e6dcdc" stroke-width="1.1"/></svg>
<div style="left:720px;top:526px;width:131px;height:32px;background:#226818;border:1.5px solid #c4c4c4"></div>
<div class="t" style="left:720.00px;top:528.00px;width:131px;text-align:center;font-size:11.7px;font-weight:bold;color:#f4f0dc;">led1 [Green]</div>
<div class="t" style="left:720.00px;top:541.00px;width:131px;text-align:center;font-size:11.7px;font-weight:bold;color:#f4f0dc;">PIXEL2</div>
<div style="left:715px;top:541.4px;width:5px;height:1px;background:#c8c8c8"></div>
<div style="left:966px;top:310px;width:77px;height:374px;background:#3a3514;border:1px solid #c9c25e"></div>
<div class="t" style="left:967.00px;top:314.00px;width:76px;text-align:center;font-size:11.5px;font-weight:bold;color:#fff;">bool->int</div>
<div class="t" style="left:966.50px;top:671.00px;width:76px;text-align:center;font-size:10.5px;color:#e6e1cc;">18</div>
<div class="t" style="left:971.00px;top:327.00px;font-size:11.5px;color:#e6e1cc;">bool0*</div>
<div style="left:940px;top:316px;width:23.5px;height:11px;background:#403641"></div>
<div class="t" style="left:931.75px;top:317.00px;width:40px;text-align:center;font-size:13px;font-weight:bold;color:#4fb2e6;">0</div>
<svg style="left:953px;top:327.0px" width="12" height="12"><circle cx="6" cy="6" r="3.4" fill="#d80000" stroke="#c4b450" stroke-width="1.1"/></svg>
<div style="left:962px;top:332.5px;width:4px;height:1px;background:#c9c25e"></div>
<div class="t" style="left:971.00px;top:349.00px;font-size:11.5px;color:#e6e1cc;">bool1*</div>
<div style="left:940px;top:338px;width:23.5px;height:11px;background:#403641"></div>
<div class="t" style="left:931.75px;top:339.00px;width:40px;text-align:center;font-size:13px;font-weight:bold;color:#d23cb4;">1</div>
<svg style="left:911px;top:349.2px" width="43.5" height="11.600000000000023"><path d="M0 0 H43.5 V11.600000000000023 H0 L6 5.800000000000011Z" fill="#fff"/></svg>
<div class="t" style="left:893.50px;top:350.00px;width:60px;text-align:right;font-size:11px;color:#1e1c34;">DIN1</div>
<svg style="left:953px;top:349.0px" width="12" height="12"><circle cx="6" cy="6" r="3.4" fill="#d80000" stroke="#c4b450" stroke-width="1.1"/></svg>
<div style="left:962px;top:354.5px;width:4px;height:1px;background:#c9c25e"></div>
<div class="t" style="left:971.00px;top:371.00px;font-size:11.5px;color:#e6e1cc;">bool2*</div>
<div style="left:940px;top:360px;width:23.5px;height:11px;background:#403641"></div>
<div class="t" style="left:931.75px;top:361.00px;width:40px;text-align:center;font-size:13px;font-weight:bold;color:#d23cb4;">1</div>
<svg style="left:911px;top:371.2px" width="43.5" height="11.600000000000023"><path d="M0 0 H43.5 V11.600000000000023 H0 L6 5.800000000000011Z" fill="#fff"/></svg>
<div class="t" style="left:893.50px;top:372.00px;width:60px;text-align:right;font-size:11px;color:#1e1c34;">DIN2</div>
<svg style="left:953px;top:371.0px" width="12" height="12"><circle cx="6" cy="6" r="3.4" fill="#d80000" stroke="#c4b450" stroke-width="1.1"/></svg>
<div style="left:962px;top:376.5px;width:4px;height:1px;background:#c9c25e"></div>
<div class="t" style="left:971.00px;top:393.00px;font-size:11.5px;color:#e6e1cc;">bool3*</div>
<div style="left:940px;top:382px;width:23.5px;height:11px;background:#403641"></div>
<div class="t" style="left:931.75px;top:383.00px;width:40px;text-align:center;font-size:13px;font-weight:bold;color:#4fb2e6;">0</div>
<svg style="left:953px;top:393.0px" width="12" height="12"><circle cx="6" cy="6" r="3.4" fill="#d80000" stroke="#c4b450" stroke-width="1.1"/></svg>
<div style="left:962px;top:398.5px;width:4px;height:1px;background:#c9c25e"></div>
<div class="t" style="left:971.00px;top:415.00px;font-size:11.5px;color:#e6e1cc;">bool4*</div>
<div style="left:940px;top:404px;width:23.5px;height:11px;background:#403641"></div>
<div class="t" style="left:931.75px;top:405.00px;width:40px;text-align:center;font-size:13px;font-weight:bold;color:#4fb2e6;">0</div>
<svg style="left:953px;top:415.0px" width="12" height="12"><circle cx="6" cy="6" r="3.4" fill="#d80000" stroke="#c4b450" stroke-width="1.1"/></svg>
<div style="left:962px;top:420.5px;width:4px;height:1px;background:#c9c25e"></div>
<div class="t" style="left:971.00px;top:437.00px;font-size:11.5px;color:#e6e1cc;">bool5*</div>
<div style="left:940px;top:426px;width:23.5px;height:11px;background:#403641"></div>
<div class="t" style="left:931.75px;top:427.00px;width:40px;text-align:center;font-size:13px;font-weight:bold;color:#4fb2e6;">0</div>
<svg style="left:953px;top:437.0px" width="12" height="12"><circle cx="6" cy="6" r="3.4" fill="#d80000" stroke="#c4b450" stroke-width="1.1"/></svg>
<div style="left:962px;top:442.5px;width:4px;height:1px;background:#c9c25e"></div>
<div class="t" style="left:971.00px;top:459.00px;font-size:11.5px;color:#e6e1cc;">bool6*</div>
<div style="left:940px;top:448px;width:23.5px;height:11px;background:#403641"></div>
<div class="t" style="left:931.75px;top:449.00px;width:40px;text-align:center;font-size:13px;font-weight:bold;color:#4fb2e6;">0</div>
<svg style="left:953px;top:459.0px" width="12" height="12"><circle cx="6" cy="6" r="3.4" fill="#d80000" stroke="#c4b450" stroke-width="1.1"/></svg>
<div style="left:962px;top:464.5px;width:4px;height:1px;background:#c9c25e"></div>
<div class="t" style="left:971.00px;top:481.00px;font-size:11.5px;color:#e6e1cc;">bool7*</div>
<div style="left:940px;top:470px;width:23.5px;height:11px;background:#403641"></div>
<div class="t" style="left:931.75px;top:471.00px;width:40px;text-align:center;font-size:13px;font-weight:bold;color:#4fb2e6;">0</div>
<svg style="left:953px;top:481.0px" width="12" height="12"><circle cx="6" cy="6" r="3.4" fill="#d80000" stroke="#c4b450" stroke-width="1.1"/></svg>
<div style="left:962px;top:486.5px;width:4px;height:1px;background:#c9c25e"></div>
<div class="t" style="left:971.00px;top:503.00px;font-size:11.5px;color:#e6e1cc;">bool8*</div>
<div style="left:940px;top:492px;width:23.5px;height:11px;background:#403641"></div>
<div class="t" style="left:931.75px;top:493.00px;width:40px;text-align:center;font-size:13px;font-weight:bold;color:#4fb2e6;">0</div>
<svg style="left:953px;top:503.0px" width="12" height="12"><circle cx="6" cy="6" r="3.4" fill="#d80000" stroke="#c4b450" stroke-width="1.1"/></svg>
<div style="left:962px;top:508.5px;width:4px;height:1px;background:#c9c25e"></div>
<div class="t" style="left:971.00px;top:525.00px;font-size:11.5px;color:#e6e1cc;">bool9*</div>
<div style="left:940px;top:514px;width:23.5px;height:11px;background:#403641"></div>
<div class="t" style="left:931.75px;top:515.00px;width:40px;text-align:center;font-size:13px;font-weight:bold;color:#4fb2e6;">0</div>
<svg style="left:953px;top:525.0px" width="12" height="12"><circle cx="6" cy="6" r="3.4" fill="#d80000" stroke="#c4b450" stroke-width="1.1"/></svg>
<div style="left:962px;top:530.5px;width:4px;height:1px;background:#c9c25e"></div>
<div class="t" style="left:971.00px;top:547.00px;font-size:11.5px;color:#e6e1cc;">bool10*</div>
<div style="left:940px;top:536px;width:23.5px;height:11px;background:#403641"></div>
<div class="t" style="left:931.75px;top:537.00px;width:40px;text-align:center;font-size:13px;font-weight:bold;color:#4fb2e6;">0</div>
<svg style="left:953px;top:547.0px" width="12" height="12"><circle cx="6" cy="6" r="3.4" fill="#d80000" stroke="#c4b450" stroke-width="1.1"/></svg>
<div style="left:962px;top:552.5px;width:4px;height:1px;background:#c9c25e"></div>
<div class="t" style="left:971.00px;top:569.00px;font-size:11.5px;color:#e6e1cc;">bool11*</div>
<div style="left:940px;top:558px;width:23.5px;height:11px;background:#403641"></div>
<div class="t" style="left:931.75px;top:559.00px;width:40px;text-align:center;font-size:13px;font-weight:bold;color:#4fb2e6;">0</div>
<svg style="left:900px;top:569.2px" width="55" height="11.599999999999909"><path d="M0 0 H55 V11.599999999999909 H0 L6 5.7999999999999545Z" fill="#fff"/><path d="M0 0 H10 L7 5.7999999999999545 L10 11.599999999999909 H0 L6 5.7999999999999545Z" fill="#e8e040"/></svg>
<div class="t" style="left:894.00px;top:570.00px;width:60px;text-align:right;font-size:11px;color:#1e1c34;">DOUT1</div>
<svg style="left:953px;top:569.0px" width="12" height="12"><circle cx="6" cy="6" r="3.4" fill="#d80000" stroke="#c4b450" stroke-width="1.1"/></svg>
<div style="left:962px;top:574.5px;width:4px;height:1px;background:#c9c25e"></div>
<div class="t" style="left:971.00px;top:591.00px;font-size:11.5px;color:#e6e1cc;">bool12*</div>
<div style="left:940px;top:580px;width:23.5px;height:11px;background:#403641"></div>
<div class="t" style="left:931.75px;top:581.00px;width:40px;text-align:center;font-size:13px;font-weight:bold;color:#d23cb4;">1</div>
<svg style="left:900px;top:591.2px" width="55" height="11.599999999999909"><path d="M0 0 H55 V11.599999999999909 H0 L6 5.7999999999999545Z" fill="#fff"/><path d="M0 0 H10 L7 5.7999999999999545 L10 11.599999999999909 H0 L6 5.7999999999999545Z" fill="#e8e040"/></svg>
<div class="t" style="left:894.00px;top:592.00px;width:60px;text-align:right;font-size:11px;color:#1e1c34;">DOUT2</div>
<svg style="left:953px;top:591.0px" width="12" height="12"><circle cx="6" cy="6" r="3.4" fill="#d80000" stroke="#c4b450" stroke-width="1.1"/></svg>
<div style="left:962px;top:596.5px;width:4px;height:1px;background:#c9c25e"></div>
<div class="t" style="left:971.00px;top:613.00px;font-size:11.5px;color:#e6e1cc;">bool13*</div>
<div style="left:940px;top:602px;width:23.5px;height:11px;background:#403641"></div>
<div class="t" style="left:931.75px;top:603.00px;width:40px;text-align:center;font-size:13px;font-weight:bold;color:#4fb2e6;">0</div>
<svg style="left:900px;top:613.2px" width="55" height="11.599999999999909"><path d="M0 0 H55 V11.599999999999909 H0 L6 5.7999999999999545Z" fill="#fff"/><path d="M0 0 H10 L7 5.7999999999999545 L10 11.599999999999909 H0 L6 5.7999999999999545Z" fill="#e8e040"/></svg>
<div class="t" style="left:894.00px;top:614.00px;width:60px;text-align:right;font-size:11px;color:#1e1c34;">DOUT3</div>
<svg style="left:953px;top:613.0px" width="12" height="12"><circle cx="6" cy="6" r="3.4" fill="#d80000" stroke="#c4b450" stroke-width="1.1"/></svg>
<div style="left:962px;top:618.5px;width:4px;height:1px;background:#c9c25e"></div>
<div class="t" style="left:971.00px;top:635.00px;font-size:11.5px;color:#e6e1cc;">bool14*</div>
<div style="left:940px;top:624px;width:23.5px;height:11px;background:#403641"></div>
<div class="t" style="left:931.75px;top:625.00px;width:40px;text-align:center;font-size:13px;font-weight:bold;color:#d23cb4;">1</div>
<svg style="left:900px;top:635.2px" width="55" height="11.599999999999909"><path d="M0 0 H55 V11.599999999999909 H0 L6 5.7999999999999545Z" fill="#fff"/></svg>
<div class="t" style="left:894.00px;top:636.00px;width:60px;text-align:right;font-size:11px;color:#1e1c34;">DOUT4</div>
<svg style="left:953px;top:635.0px" width="12" height="12"><circle cx="6" cy="6" r="3.4" fill="#d80000" stroke="#c4b450" stroke-width="1.1"/></svg>
<div style="left:962px;top:640.5px;width:4px;height:1px;background:#c9c25e"></div>
<div class="t" style="left:971.00px;top:657.00px;font-size:11.5px;color:#e6e1cc;">bool15*</div>
<div style="left:940px;top:646px;width:23.5px;height:11px;background:#403641"></div>
<div class="t" style="left:931.75px;top:647.00px;width:40px;text-align:center;font-size:13px;font-weight:bold;color:#4fb2e6;">0</div>
<svg style="left:953px;top:657.0px" width="12" height="12"><circle cx="6" cy="6" r="3.4" fill="#d80000" stroke="#c4b450" stroke-width="1.1"/></svg>
<div style="left:962px;top:662.5px;width:4px;height:1px;background:#c9c25e"></div>
<div class="t" style="left:1009.00px;top:493.00px;width:30px;text-align:right;font-size:11.5px;color:#e6e1cc;">int</div>
<div style="left:1025.6px;top:479px;width:56.40000000000009px;height:11px;background:#403641"></div>
<div class="t" style="left:1032.00px;top:479.00px;font-size:13px;font-weight:bold;color:#3fc23f;letter-spacing:-1px;">20486</div>
<div class="t" style="left:1071.00px;top:482.00px;font-size:11px;font-weight:bold;color:#3fc23f;">_1</div>
<div style="left:1043px;top:497.0px;width:5px;height:1px;background:#c9c25e"></div>
<svg style="left:1045px;top:491.5px" width="12" height="12"><circle cx="6" cy="6" r="3.4" fill="#48b848" stroke="#9ad070" stroke-width="1.1"/></svg>
<div style="left:1054px;top:497.0px;width:12px;height:1px;background:#e0e0e0"></div>
<div style="left:1064.6px;top:490.0px;width:4px;height:8px;background:#f0f0f0"></div>
<div style="left:1066px;top:495.0px;width:9px;height:1px;background:#e0e0e0"></div>
<svg style="left:1069px;top:489.5px" width="12" height="12"><circle cx="6" cy="6" r="3.4" fill="#48b848" stroke="#9ad070" stroke-width="1.1"/></svg>
<div style="left:1083px;top:481px;width:69px;height:29px;background:#122c3c;border:1px solid #a8a45a;border-radius:5px"></div>
<svg style="left:1088px;top:485px" width="11" height="11"><rect x="0.5" y="0.5" width="10" height="10" fill="none" stroke="#c8c070"/><path d="M2 5 L4.5 8 L9 1.5" stroke="#c8c070" fill="none"/></svg>
<div class="t" style="left:1099.00px;top:484.00px;font-size:12px;font-weight:bold;color:#f4f0e0;font-family:'Liberation Serif',serif;">DI_DO</div>
<div style="left:1143px;top:125px;width:219px;height:231px;background:#0d2a64;border:1px solid #0a1848"></div>
<div style="left:1143px;top:125px;width:219px;height:21px;background:#14323f;border:1px solid #0a1848"></div>
<div class="t" style="left:1149.60px;top:129.00px;font-size:11.8px;font-weight:bold;color:#7894a4;">\ Экран Журнал \ Журнал событий</div>
<div class="t" style="left:1152.50px;top:151.00px;width:200px;text-align:center;font-size:11.3px;font-weight:bold;color:#f0f0f4;">Журнал событий</div>
<div class="t" style="left:1152.50px;top:163.00px;width:200px;text-align:center;font-size:12.3px;color:#f0f0f4;">[Журнал]</div>
<div class="t" style="left:1147.60px;top:185.00px;font-size:11.2px;color:#f0f0f4;">Событие 1</div>
<div style="left:1116px;top:173px;width:24px;height:11px;background:#403641"></div>
<div class="t" style="left:1108.00px;top:174.00px;width:40px;text-align:center;font-size:13px;font-weight:bold;color:#d23cb4;">1</div>
<svg style="left:1088.4px;top:184.7px" width="42.59999999999991" height="11.0"><path d="M0 0 H42.59999999999991 V11.0 H0 L6 5.5Z" fill="#fff"/></svg>
<div class="t" style="left:1070.00px;top:185.00px;width:60px;text-align:right;font-size:11px;color:#1e1c34;">DIN1</div>
<svg style="left:1130px;top:184.2px" width="12" height="12"><circle cx="6" cy="6" r="2.6" fill="#d80000" stroke="#801010" stroke-width="1.1"/></svg>
<div class="t" style="left:1147.60px;top:207.00px;font-size:11.2px;color:#f0f0f4;">Событие 2</div>
<div style="left:1116px;top:195px;width:24px;height:11px;background:#403641"></div>
<div class="t" style="left:1108.00px;top:196.00px;width:40px;text-align:center;font-size:13px;font-weight:bold;color:#d23cb4;">1</div>
<svg style="left:1088.4px;top:206.7px" width="42.59999999999991" height="11.0"><path d="M0 0 H42.59999999999991 V11.0 H0 L6 5.5Z" fill="#fff"/></svg>
<div class="t" style="left:1070.00px;top:207.00px;width:60px;text-align:right;font-size:11px;color:#1e1c34;">DIN2</div>
<svg style="left:1130px;top:206.2px" width="12" height="12"><circle cx="6" cy="6" r="2.6" fill="#d80000" stroke="#801010" stroke-width="1.1"/></svg>
<div class="t" style="left:1147.60px;top:229.00px;font-size:11.2px;color:#f0f0f4;">Событие 3</div>
<div style="left:1116px;top:217px;width:24px;height:11px;background:#403641"></div>
<div class="t" style="left:1108.00px;top:218.00px;width:40px;text-align:center;font-size:13px;font-weight:bold;color:#4fb2e6;">0</div>
<svg style="left:1076.7px;top:228.7px" width="54.299999999999955" height="11.0"><path d="M0 0 H54.299999999999955 V11.0 H0 L6 5.5Z" fill="#fff"/></svg>
<div class="t" style="left:1070.00px;top:229.00px;width:60px;text-align:right;font-size:11px;color:#1e1c34;">DOUT1</div>
<svg style="left:1130px;top:228.2px" width="12" height="12"><circle cx="6" cy="6" r="2.6" fill="#d80000" stroke="#801010" stroke-width="1.1"/></svg>
<div class="t" style="left:1147.60px;top:251.00px;font-size:11.2px;color:#f0f0f4;">Событие 4</div>
<div style="left:1116px;top:239px;width:24px;height:11px;background:#403641"></div>
<div class="t" style="left:1108.00px;top:240.00px;width:40px;text-align:center;font-size:13px;font-weight:bold;color:#d23cb4;">1</div>
<svg style="left:1076.7px;top:250.7px" width="54.299999999999955" height="11.0"><path d="M0 0 H54.299999999999955 V11.0 H0 L6 5.5Z" fill="#fff"/></svg>
<div class="t" style="left:1070.00px;top:251.00px;width:60px;text-align:right;font-size:11px;color:#1e1c34;">DOUT2</div>
<svg style="left:1130px;top:250.2px" width="12" height="12"><circle cx="6" cy="6" r="2.6" fill="#d80000" stroke="#801010" stroke-width="1.1"/></svg>
<div class="t" style="left:1147.60px;top:273.00px;font-size:11.2px;color:#f0f0f4;">Событие 5</div>
<div style="left:1116px;top:261px;width:24px;height:11px;background:#403641"></div>
<div class="t" style="left:1108.00px;top:262.00px;width:40px;text-align:center;font-size:13px;font-weight:bold;color:#4fb2e6;">0</div>
<svg style="left:1076.7px;top:272.7px" width="54.299999999999955" height="11.0"><path d="M0 0 H54.299999999999955 V11.0 H0 L6 5.5Z" fill="#fff"/></svg>
<div class="t" style="left:1070.00px;top:273.00px;width:60px;text-align:right;font-size:11px;color:#1e1c34;">DOUT3</div>
<svg style="left:1130px;top:272.2px" width="12" height="12"><circle cx="6" cy="6" r="2.6" fill="#d80000" stroke="#801010" stroke-width="1.1"/></svg>
<div class="t" style="left:1147.60px;top:295.00px;font-size:11.2px;color:#f0f0f4;">Событие 6</div>
<div style="left:1116px;top:283px;width:24px;height:11px;background:#403641"></div>
<div class="t" style="left:1108.00px;top:284.00px;width:40px;text-align:center;font-size:13px;font-weight:bold;color:#d23cb4;">1</div>
<svg style="left:1076.7px;top:294.7px" width="54.299999999999955" height="11.0"><path d="M0 0 H54.299999999999955 V11.0 H0 L6 5.5Z" fill="#fff"/></svg>
<div class="t" style="left:1070.00px;top:295.00px;width:60px;text-align:right;font-size:11px;color:#1e1c34;">DOUT4</div>
<svg style="left:1130px;top:294.2px" width="12" height="12"><circle cx="6" cy="6" r="2.6" fill="#d80000" stroke="#801010" stroke-width="1.1"/></svg>
<div class="t" style="left:1147.60px;top:317.00px;font-size:11.2px;color:#f0f0f4;">Очистка журнала</div>
<div style="left:1116px;top:305px;width:24px;height:11px;background:#403641"></div>
<div class="t" style="left:1108.00px;top:306.00px;width:40px;text-align:center;font-size:13px;font-weight:bold;color:#4fb2e6;">0</div>
<svg style="left:1130px;top:316.2px" width="12" height="12"><circle cx="6" cy="6" r="2.6" fill="#d80000" stroke="#801010" stroke-width="1.1"/></svg>
<div class="t" style="left:1147.60px;top:339.00px;font-size:11.2px;color:#f0f0f4;">Запоминать позицию</div>
<div style="left:1116px;top:327px;width:24px;height:11px;background:#403641"></div>
<div class="t" style="left:1108.00px;top:328.00px;width:40px;text-align:center;font-size:13px;font-weight:bold;color:#4fb2e6;">0</div>
<svg style="left:1130px;top:338.2px" width="12" height="12"><circle cx="6" cy="6" r="2.6" fill="#d80000" stroke="#801010" stroke-width="1.1"/></svg>
<div class="t" style="left:1207.50px;top:185.00px;width:150px;text-align:right;font-size:11.2px;color:#f0f0f4;">Журнал готов</div>
<div style="left:1364px;top:173px;width:24px;height:11px;background:#403641"></div>
<div class="t" style="left:1356.00px;top:174.00px;width:40px;text-align:center;font-size:13px;font-weight:bold;color:#d23cb4;">1</div>
<svg style="left:1364px;top:184.2px" width="12" height="12"><circle cx="6" cy="6" r="2.6" fill="#d80000" stroke="#801010" stroke-width="1.1"/></svg>
<div class="t" style="left:1207.50px;top:207.00px;width:150px;text-align:right;font-size:11.2px;color:#f0f0f4;">Номер события</div>
<div style="left:1364px;top:195px;width:24px;height:11px;background:#403641"></div>
<div class="t" style="left:1356.00px;top:196.00px;width:40px;text-align:center;font-size:13px;font-weight:bold;color:#3fc23f;">1</div>
<svg style="left:1364px;top:206.2px" width="12" height="12"><circle cx="6" cy="6" r="2.4" fill="#48b848" stroke="#206020" stroke-width="1.1"/></svg>
<div class="t" style="left:1207.50px;top:229.00px;width:150px;text-align:right;font-size:11.2px;color:#f0f0f4;">Выбранное событие</div>
<div style="left:1364px;top:217px;width:24px;height:11px;background:#403641"></div>
<div class="t" style="left:1356.00px;top:218.00px;width:40px;text-align:center;font-size:13px;font-weight:bold;color:#3fc23f;">4</div>
<svg style="left:1364px;top:228.2px" width="12" height="12"><circle cx="6" cy="6" r="2.4" fill="#48b848" stroke="#206020" stroke-width="1.1"/></svg>
<div class="t" style="left:1207.50px;top:251.00px;width:150px;text-align:right;font-size:11.2px;color:#f0f0f4;">Доступно</div>
<div style="left:1364px;top:239px;width:24px;height:11px;background:#403641"></div>
<div class="t" style="left:1356.00px;top:240.00px;width:40px;text-align:center;font-size:13px;font-weight:bold;color:#3fc23f;">0</div>
<svg style="left:1364px;top:250.2px" width="12" height="12"><circle cx="6" cy="6" r="2.4" fill="#48b848" stroke="#206020" stroke-width="1.1"/></svg>
</body></html>
